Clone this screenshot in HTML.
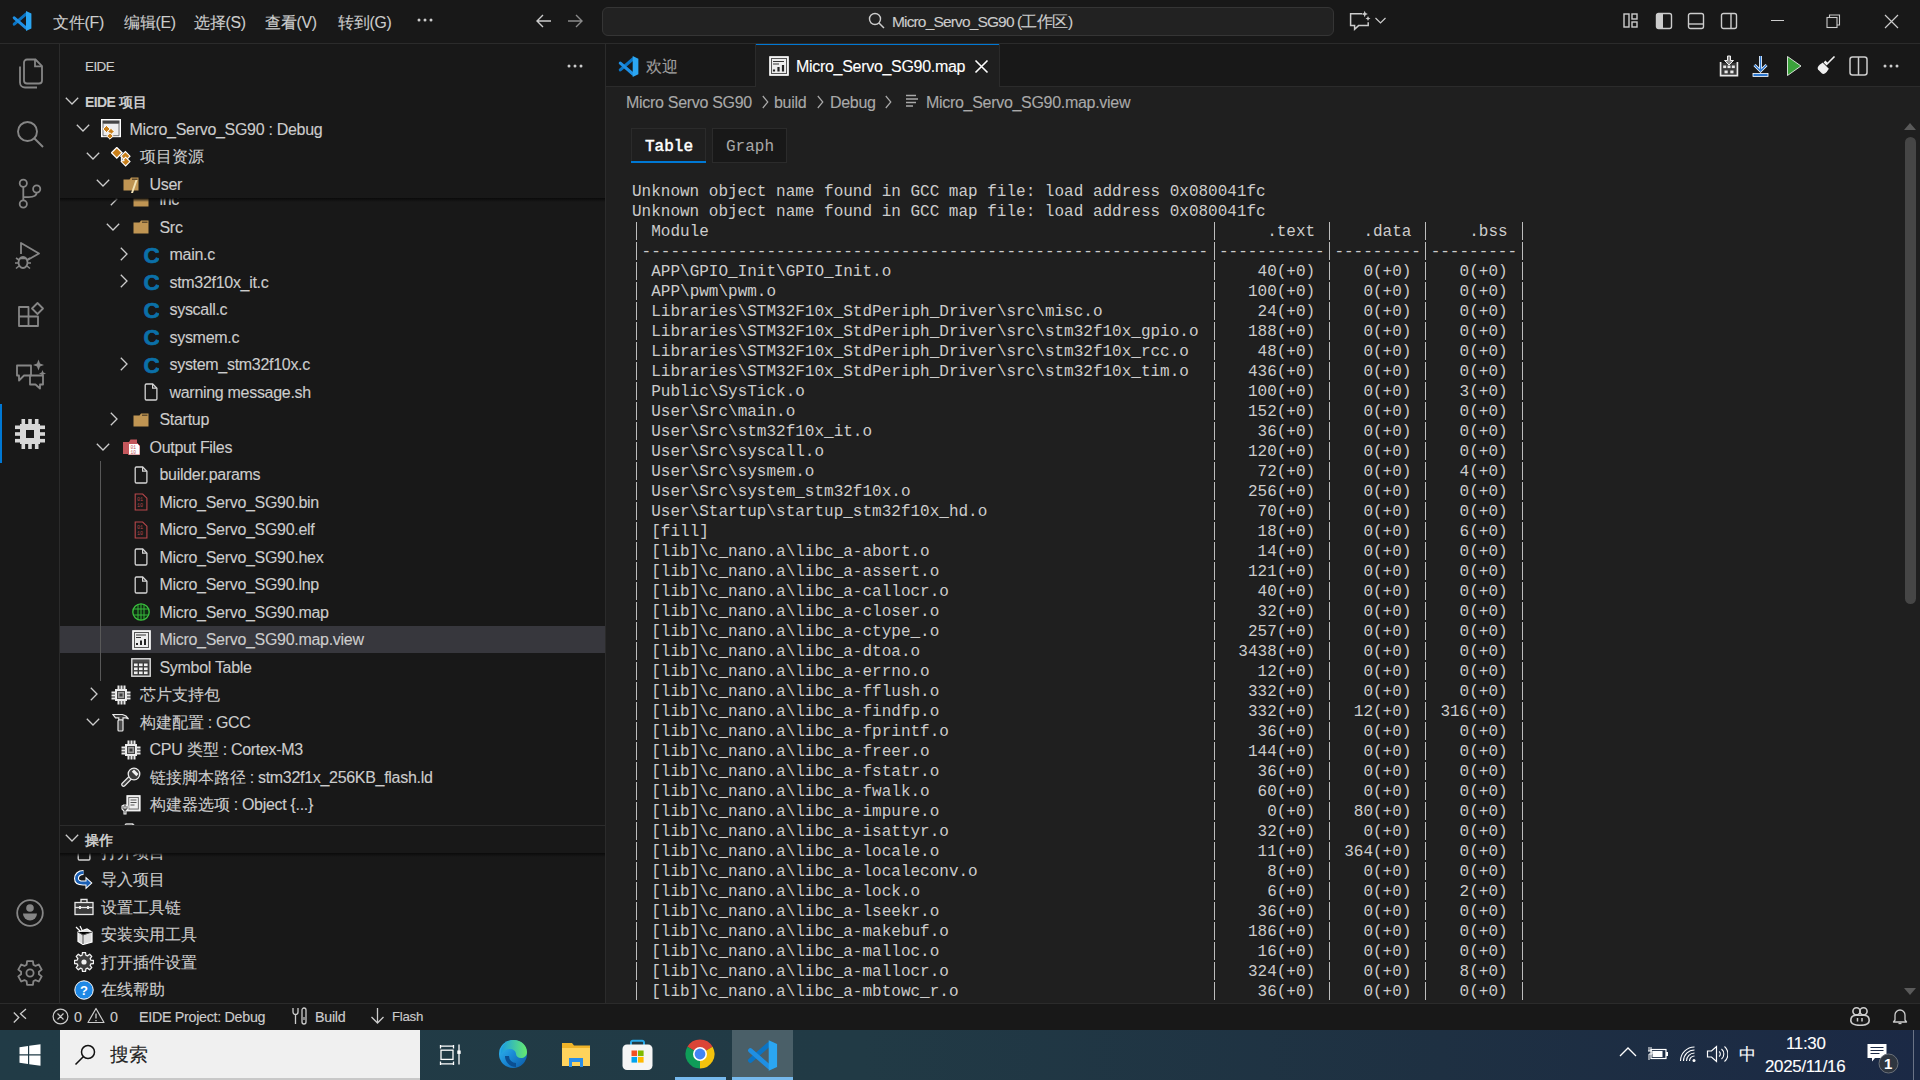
<!DOCTYPE html><html><head><meta charset="utf-8"><style>
html,body{margin:0;padding:0;}
body{width:1920px;height:1080px;overflow:hidden;position:relative;background:#181818;font-family:'Liberation Sans',sans-serif;color:#cccccc;}
svg{display:block}
</style></head><body>
<div style="position:absolute;left:0px;top:0px;width:1920px;height:43px;background:#181818;"></div>
<div style="position:absolute;left:0px;top:43px;width:1920px;height:1px;background:#2b2b2b;"></div>
<svg style="position:absolute;left:12px;top:11px;" width="20" height="20" viewBox="0 0 100 100"><path d="M71 14L11 66" stroke="#0b74c4" stroke-width="15" stroke-linecap="round"/><path d="M71 86L11 34" stroke="#1f8fe3" stroke-width="15" stroke-linecap="round"/><path d="M70 0.5L97 13v74L70 99.5z" fill="#2ba6f2"/></svg>
<div style="position:absolute;left:53px;top:12.6px;height:20px;line-height:20px;font-size:15.8px;color:#cccccc;font-weight:normal;white-space:pre;font-family:'Liberation Sans', sans-serif;letter-spacing:-0.3px;-webkit-text-stroke:0.12px #cccccc;"><span style="display:inline-block;width:15.80px;text-align:center;letter-spacing:0">文</span><span style="display:inline-block;width:15.80px;text-align:center;letter-spacing:0">件</span>(F)</div>
<div style="position:absolute;left:124px;top:12.6px;height:20px;line-height:20px;font-size:15.8px;color:#cccccc;font-weight:normal;white-space:pre;font-family:'Liberation Sans', sans-serif;letter-spacing:-0.3px;-webkit-text-stroke:0.12px #cccccc;"><span style="display:inline-block;width:15.80px;text-align:center;letter-spacing:0">编</span><span style="display:inline-block;width:15.80px;text-align:center;letter-spacing:0">辑</span>(E)</div>
<div style="position:absolute;left:194px;top:12.6px;height:20px;line-height:20px;font-size:15.8px;color:#cccccc;font-weight:normal;white-space:pre;font-family:'Liberation Sans', sans-serif;letter-spacing:-0.3px;-webkit-text-stroke:0.12px #cccccc;"><span style="display:inline-block;width:15.80px;text-align:center;letter-spacing:0">选</span><span style="display:inline-block;width:15.80px;text-align:center;letter-spacing:0">择</span>(S)</div>
<div style="position:absolute;left:265px;top:12.6px;height:20px;line-height:20px;font-size:15.8px;color:#cccccc;font-weight:normal;white-space:pre;font-family:'Liberation Sans', sans-serif;letter-spacing:-0.3px;-webkit-text-stroke:0.12px #cccccc;"><span style="display:inline-block;width:15.80px;text-align:center;letter-spacing:0">查</span><span style="display:inline-block;width:15.80px;text-align:center;letter-spacing:0">看</span>(V)</div>
<div style="position:absolute;left:338px;top:12.6px;height:20px;line-height:20px;font-size:15.8px;color:#cccccc;font-weight:normal;white-space:pre;font-family:'Liberation Sans', sans-serif;letter-spacing:-0.3px;-webkit-text-stroke:0.12px #cccccc;"><span style="display:inline-block;width:15.80px;text-align:center;letter-spacing:0">转</span><span style="display:inline-block;width:15.80px;text-align:center;letter-spacing:0">到</span>(G)</div>
<svg style="position:absolute;left:417px;top:18px;" width="16" height="4" viewBox="0 0 16 4"><circle cx="2" cy="2" r="1.5" fill="#cccccc"/><circle cx="8" cy="2" r="1.5" fill="#cccccc"/><circle cx="14" cy="2" r="1.5" fill="#cccccc"/></svg>
<svg style="position:absolute;left:535px;top:13px;" width="17" height="16" viewBox="0 0 17 16"><path d="M16 8H2M8 2L2 8l6 6" stroke="#cccccc" stroke-width="1.4" fill="none"/></svg>
<svg style="position:absolute;left:567px;top:13px;" width="17" height="16" viewBox="0 0 17 16"><path d="M1 8h14M9 2l6 6-6 6" stroke="#8a8a8a" stroke-width="1.4" fill="none"/></svg>
<div style="position:absolute;left:602px;top:7px;width:730px;height:27px;background:#222222;border:1px solid #353535;border-radius:6px;"></div>
<svg style="position:absolute;left:868px;top:12px;" width="17" height="18" viewBox="0 0 17 18"><circle cx="7" cy="7" r="5.5" stroke="#cccccc" stroke-width="1.4" fill="none"/><path d="M11 11l5 5" stroke="#cccccc" stroke-width="1.5"/></svg>
<div style="position:absolute;left:892px;top:11.6px;height:20px;line-height:20px;font-size:15.5px;color:#cccccc;font-weight:normal;white-space:pre;font-family:'Liberation Sans', sans-serif;letter-spacing:-0.85px;-webkit-text-stroke:0.12px #cccccc;">Micro_Servo_SG90 (<span style="display:inline-block;width:15.50px;text-align:center;letter-spacing:0">工</span><span style="display:inline-block;width:15.50px;text-align:center;letter-spacing:0">作</span><span style="display:inline-block;width:15.50px;text-align:center;letter-spacing:0">区</span>)</div>
<svg style="position:absolute;left:1349px;top:10px;" width="40" height="22" viewBox="0 0 40 22"><path d="M13 3.8H1.6v11.8h4v3.6l4-3.6h9.6v-3.4" stroke="#cccccc" stroke-width="1.5" fill="none"/><path d="M15.7 0.8l0.9 2.3 2.3 0.9-2.3 0.9-0.9 2.3-0.9-2.3-2.3-0.9 2.3-0.9z" fill="#cccccc"/><path d="M19 6l0.8 1.7 1.7 0.8-1.7 0.8-0.8 1.7-0.8-1.7-1.7-0.8 1.7-0.8z" fill="#cccccc"/><path d="M26.5 8l5 5 5-5" stroke="#cccccc" stroke-width="1.2" fill="none"/></svg>
<svg style="position:absolute;left:1622px;top:12px;" width="18" height="18" viewBox="0 0 18 18"><rect x="2" y="2" width="5" height="13" stroke="#cccccc" stroke-width="1.4" fill="none"/><rect x="10" y="2" width="5" height="5" stroke="#cccccc" stroke-width="1.4" fill="none"/><rect x="10" y="10" width="5" height="5" stroke="#cccccc" stroke-width="1.4" fill="none"/></svg>
<svg style="position:absolute;left:1655px;top:12px;" width="18" height="18" viewBox="0 0 18 18"><rect x="1.5" y="1.5" width="15" height="15" rx="2" stroke="#cccccc" stroke-width="1.4" fill="none"/><rect x="2" y="2" width="6" height="14" fill="#cccccc"/></svg>
<svg style="position:absolute;left:1687px;top:12px;" width="18" height="18" viewBox="0 0 18 18"><rect x="1.5" y="1.5" width="15" height="15" rx="2" stroke="#cccccc" stroke-width="1.4" fill="none"/><path d="M2 12h14" stroke="#cccccc" stroke-width="1.4"/></svg>
<svg style="position:absolute;left:1720px;top:12px;" width="18" height="18" viewBox="0 0 18 18"><rect x="1.5" y="1.5" width="15" height="15" rx="2" stroke="#cccccc" stroke-width="1.4" fill="none"/><path d="M11 2v14" stroke="#cccccc" stroke-width="1.4"/></svg>
<div style="position:absolute;left:1771px;top:20px;width:13px;height:1px;background:#cccccc;"></div>
<svg style="position:absolute;left:1826px;top:14px;" width="15" height="15" viewBox="0 0 15 15"><rect x="1" y="3.5" width="10" height="10" stroke="#cccccc" stroke-width="1.1" fill="none"/><path d="M3.5 3.5V1h10v10h-2.5" stroke="#cccccc" stroke-width="1.1" fill="none"/></svg>
<svg style="position:absolute;left:1884px;top:14px;" width="15" height="15" viewBox="0 0 15 15"><path d="M1 1l13 13M14 1L1 14" stroke="#cccccc" stroke-width="1.2"/></svg>
<div style="position:absolute;left:0px;top:44px;width:59px;height:959px;background:#181818;"></div>
<div style="position:absolute;left:59px;top:44px;width:1px;height:959px;background:#2b2b2b;"></div>
<svg style="position:absolute;left:16px;top:58px;" width="28" height="31" viewBox="0 0 28 31"><path d="M8 4.5a3 3 0 0 1 3-3h8.5l6.5 6.5v14.5a3 3 0 0 1-3 3H11a3 3 0 0 1-3-3z" stroke="#868686" stroke-width="1.8" fill="none"/><path d="M19 1.5v6.8h6.8" stroke="#868686" stroke-width="1.8" fill="none"/><path d="M4 8.5v16a5 5 0 0 0 5 5h12" stroke="#868686" stroke-width="1.8" fill="none"/></svg>
<svg style="position:absolute;left:15px;top:119px;" width="30" height="30" viewBox="0 0 30 30"><circle cx="12.5" cy="12.5" r="9.5" stroke="#868686" stroke-width="1.9" fill="none"/><path d="M19.5 19.5l8.5 8.5" stroke="#868686" stroke-width="2" /></svg>
<svg style="position:absolute;left:15px;top:177px;" width="30" height="34" viewBox="0 0 30 34"><circle cx="8.3" cy="6.3" r="3.6" stroke="#868686" stroke-width="1.8" fill="none"/><circle cx="21.7" cy="12" r="3.6" stroke="#868686" stroke-width="1.8" fill="none"/><circle cx="8.3" cy="27" r="3.6" stroke="#868686" stroke-width="1.8" fill="none"/><path d="M8.3 10v13.4M21.7 15.6c0 4-4 4.5-8 4.5H8.3" stroke="#868686" stroke-width="1.8" fill="none"/></svg>
<svg style="position:absolute;left:13px;top:241px;" width="32" height="30" viewBox="0 0 32 30"><path d="M8 13V2l18 10.5-11.5 6.5" stroke="#868686" stroke-width="1.8" fill="none" stroke-linejoin="round"/><ellipse cx="10" cy="21.5" rx="4.5" ry="5.5" stroke="#868686" stroke-width="1.8" fill="none"/><path d="M3 17l3 2M17 17l-3 2M2 22h3.5M18 22h-3.5M3 27.5l3-2.5M17 27.5l-3-2.5M6.5 17.5h7" stroke="#868686" stroke-width="1.6"/></svg>
<svg style="position:absolute;left:16px;top:300px;" width="30" height="30" viewBox="0 0 30 30"><path d="M3 7h9.5v9.5H22V26H3z M3 16.5h9.5V26" stroke="#868686" stroke-width="1.8" fill="none" stroke-linejoin="round"/><path d="M16 8.5l5.5-5.5 5.5 5.5-5.5 5.5z" stroke="#868686" stroke-width="1.8" fill="none" stroke-linejoin="round"/></svg>
<svg style="position:absolute;left:13px;top:357px;" width="34" height="34" viewBox="0 0 34 34"><path d="M4 8.5h14v10H11l-5 5v-5H4z" stroke="#868686" stroke-width="1.8" fill="none" stroke-linejoin="round"/><path d="M17 18.5h13v9h-3v4l-4.5-4H17z" stroke="#868686" stroke-width="1.8" fill="none" stroke-linejoin="round"/><path d="M25.5 2.5l1.5 4 4 1.5-4 1.5-1.5 4-1.5-4-4-1.5 4-1.5z" fill="#868686"/><path d="M29.5 13l1 2.5 2.5 1-2.5 1-1 2.5-1-2.5-2.5-1 2.5-1z" fill="#868686"/></svg>
<svg style="position:absolute;left:15px;top:419px;" width="30" height="30" viewBox="0 0 30 30"><rect x="5" y="5" width="20" height="20" fill="#d7d7d7"/><rect x="11" y="11" width="8" height="8" fill="#181818"/><rect x="6.500000000000001" y="0" width="3.6" height="5.5" fill="#d7d7d7"/><rect x="6.500000000000001" y="24.5" width="3.6" height="5.5" fill="#d7d7d7"/><rect x="0" y="6.500000000000001" width="5.5" height="3.6" fill="#d7d7d7"/><rect x="24.5" y="6.500000000000001" width="5.5" height="3.6" fill="#d7d7d7"/><rect x="13.2" y="0" width="3.6" height="5.5" fill="#d7d7d7"/><rect x="13.2" y="24.5" width="3.6" height="5.5" fill="#d7d7d7"/><rect x="0" y="13.2" width="5.5" height="3.6" fill="#d7d7d7"/><rect x="24.5" y="13.2" width="5.5" height="3.6" fill="#d7d7d7"/><rect x="19.9" y="0" width="3.6" height="5.5" fill="#d7d7d7"/><rect x="19.9" y="24.5" width="3.6" height="5.5" fill="#d7d7d7"/><rect x="0" y="19.9" width="5.5" height="3.6" fill="#d7d7d7"/><rect x="24.5" y="19.9" width="5.5" height="3.6" fill="#d7d7d7"/></svg>
<div style="position:absolute;left:0px;top:404px;width:2px;height:59px;background:#0078d4;"></div>
<svg style="position:absolute;left:16px;top:899px;" width="28" height="28" viewBox="0 0 28 28"><circle cx="14" cy="14" r="12.8" stroke="#868686" stroke-width="1.8" fill="none"/><circle cx="14" cy="9" r="3.8" fill="#868686"/><path d="M7 14.5h14a7 7 0 0 1-14 0z" fill="#868686"/></svg>
<svg style="position:absolute;left:16px;top:959px;" width="28" height="28" viewBox="0 0 28 28"><path d="M11.05 2.16 L16.95 2.16 L17.37 5.66 L19.54 6.91 L22.78 5.53 L25.73 10.64 L22.91 12.75 L22.91 15.25 L25.73 17.36 L22.78 22.47 L19.54 21.09 L17.37 22.34 L16.95 25.84 L11.05 25.84 L10.63 22.34 L8.46 21.09 L5.22 22.47 L2.27 17.36 L5.09 15.25 L5.09 12.75 L2.27 10.64 L5.22 5.53 L8.46 6.91 L10.63 5.66z" stroke="#868686" stroke-width="1.8" fill="none" stroke-linejoin="round"/><circle cx="14" cy="14" r="3.6" stroke="#868686" stroke-width="1.8" fill="none"/></svg>
<div style="position:absolute;left:60px;top:44px;width:545px;height:959px;background:#181818;"></div>
<div style="position:absolute;left:605px;top:44px;width:1px;height:959px;background:#2b2b2b;"></div>
<div style="position:absolute;left:85px;top:56.6px;height:20px;line-height:20px;font-size:13.5px;color:#cccccc;font-weight:normal;white-space:pre;font-family:'Liberation Sans', sans-serif;letter-spacing:-0.6px;-webkit-text-stroke:0.12px #cccccc;">EIDE</div>
<svg style="position:absolute;left:567px;top:64px;" width="16" height="4" viewBox="0 0 16 4"><circle cx="2" cy="2" r="1.5" fill="#cccccc"/><circle cx="8" cy="2" r="1.5" fill="#cccccc"/><circle cx="14" cy="2" r="1.5" fill="#cccccc"/></svg>
<svg style="position:absolute;left:65px;top:96.8px;" width="14" height="8" viewBox="0 0 14 8"><path d="M0.8 0.8L7 7l6.2-6.2" stroke="#cccccc" stroke-width="1.3" fill="none"/></svg>
<div style="position:absolute;left:85px;top:92.1px;height:20px;line-height:20px;font-size:14px;color:#cccccc;font-weight:bold;white-space:pre;font-family:'Liberation Sans', sans-serif;letter-spacing:-0.6px;">EIDE <span style="display:inline-block;width:14.00px;text-align:center;letter-spacing:0">项</span><span style="display:inline-block;width:14.00px;text-align:center;letter-spacing:0">目</span></div>
<div style="position:absolute;left:60px;top:626px;width:545px;height:27px;background:#37373d;"></div>
<div style="position:absolute;left:100px;top:461px;width:1px;height:220px;background:#585858;"></div>
<svg style="position:absolute;left:109.5px;top:191.95px;" width="8" height="14" viewBox="0 0 8 14"><path d="M0.8 0.8L7 7l-6.2 6.2" stroke="#cccccc" stroke-width="1.3" fill="none"/></svg>
<svg style="position:absolute;left:133px;top:192.75px;" width="16" height="16" viewBox="0 0 16 16"><path d="M0.5 2.5h6l1.5-2h7.5v13h-15z" fill="#c09553"/><path d="M9 2.2h5.5" stroke="#3a2f1f" stroke-width="1"/></svg>
<div style="position:absolute;left:159.5px;top:190.35px;height:20px;line-height:20px;font-size:16px;color:#cccccc;font-weight:normal;white-space:pre;font-family:'Liberation Sans', sans-serif;letter-spacing:-0.3px;-webkit-text-stroke:0.12px #cccccc;">inc</div>
<svg style="position:absolute;left:106.3px;top:222.55px;" width="14" height="8" viewBox="0 0 14 8"><path d="M0.8 0.8L7 7l6.2-6.2" stroke="#cccccc" stroke-width="1.3" fill="none"/></svg>
<svg style="position:absolute;left:133px;top:220.25px;" width="16" height="16" viewBox="0 0 16 16"><path d="M0.5 2.5h6l1.5-2h7.5v13h-15z" fill="#c09553"/><path d="M9 2.2h5.5" stroke="#3a2f1f" stroke-width="1"/></svg>
<div style="position:absolute;left:159.5px;top:217.85px;height:20px;line-height:20px;font-size:16px;color:#cccccc;font-weight:normal;white-space:pre;font-family:'Liberation Sans', sans-serif;letter-spacing:-0.3px;-webkit-text-stroke:0.12px #cccccc;">Src</div>
<svg style="position:absolute;left:119.5px;top:246.95px;" width="8" height="14" viewBox="0 0 8 14"><path d="M0.8 0.8L7 7l-6.2 6.2" stroke="#cccccc" stroke-width="1.3" fill="none"/></svg>
<svg style="position:absolute;left:143px;top:245.75px;" width="16" height="18" viewBox="0 0 16 18"><text x="0.4" y="16.6" font-size="22.5" font-weight="bold" fill="#0b70a8" stroke="#0b70a8" stroke-width="0.7" font-family="Liberation Sans">C</text></svg>
<div style="position:absolute;left:169.5px;top:245.35px;height:20px;line-height:20px;font-size:16px;color:#cccccc;font-weight:normal;white-space:pre;font-family:'Liberation Sans', sans-serif;letter-spacing:-0.3px;-webkit-text-stroke:0.12px #cccccc;">main.c</div>
<svg style="position:absolute;left:119.5px;top:274.45px;" width="8" height="14" viewBox="0 0 8 14"><path d="M0.8 0.8L7 7l-6.2 6.2" stroke="#cccccc" stroke-width="1.3" fill="none"/></svg>
<svg style="position:absolute;left:143px;top:273.25px;" width="16" height="18" viewBox="0 0 16 18"><text x="0.4" y="16.6" font-size="22.5" font-weight="bold" fill="#0b70a8" stroke="#0b70a8" stroke-width="0.7" font-family="Liberation Sans">C</text></svg>
<div style="position:absolute;left:169.5px;top:272.85px;height:20px;line-height:20px;font-size:16px;color:#cccccc;font-weight:normal;white-space:pre;font-family:'Liberation Sans', sans-serif;letter-spacing:-0.3px;-webkit-text-stroke:0.12px #cccccc;">stm32f10x_it.c</div>
<svg style="position:absolute;left:143px;top:300.75px;" width="16" height="18" viewBox="0 0 16 18"><text x="0.4" y="16.6" font-size="22.5" font-weight="bold" fill="#0b70a8" stroke="#0b70a8" stroke-width="0.7" font-family="Liberation Sans">C</text></svg>
<div style="position:absolute;left:169.5px;top:300.35px;height:20px;line-height:20px;font-size:16px;color:#cccccc;font-weight:normal;white-space:pre;font-family:'Liberation Sans', sans-serif;letter-spacing:-0.3px;-webkit-text-stroke:0.12px #cccccc;">syscall.c</div>
<svg style="position:absolute;left:143px;top:328.25px;" width="16" height="18" viewBox="0 0 16 18"><text x="0.4" y="16.6" font-size="22.5" font-weight="bold" fill="#0b70a8" stroke="#0b70a8" stroke-width="0.7" font-family="Liberation Sans">C</text></svg>
<div style="position:absolute;left:169.5px;top:327.85px;height:20px;line-height:20px;font-size:16px;color:#cccccc;font-weight:normal;white-space:pre;font-family:'Liberation Sans', sans-serif;letter-spacing:-0.3px;-webkit-text-stroke:0.12px #cccccc;">sysmem.c</div>
<svg style="position:absolute;left:119.5px;top:356.95px;" width="8" height="14" viewBox="0 0 8 14"><path d="M0.8 0.8L7 7l-6.2 6.2" stroke="#cccccc" stroke-width="1.3" fill="none"/></svg>
<svg style="position:absolute;left:143px;top:355.75px;" width="16" height="18" viewBox="0 0 16 18"><text x="0.4" y="16.6" font-size="22.5" font-weight="bold" fill="#0b70a8" stroke="#0b70a8" stroke-width="0.7" font-family="Liberation Sans">C</text></svg>
<div style="position:absolute;left:169.5px;top:355.35px;height:20px;line-height:20px;font-size:16px;color:#cccccc;font-weight:normal;white-space:pre;font-family:'Liberation Sans', sans-serif;letter-spacing:-0.3px;-webkit-text-stroke:0.12px #cccccc;">system_stm32f10x.c</div>
<svg style="position:absolute;left:144px;top:383.25px;" width="14" height="18" viewBox="0 0 14 18"><path d="M1.2 2.2a1.2 1.2 0 0 1 1.2-1.2h6.3l4.2 4.2v10.6a1.2 1.2 0 0 1-1.2 1.2H2.4a1.2 1.2 0 0 1-1.2-1.2z" stroke="#d4d4d4" stroke-width="1.3" fill="none"/><path d="M8.6 1v4.2h4.2" stroke="#d4d4d4" stroke-width="1.2" fill="none"/></svg>
<div style="position:absolute;left:169.5px;top:382.85px;height:20px;line-height:20px;font-size:16px;color:#cccccc;font-weight:normal;white-space:pre;font-family:'Liberation Sans', sans-serif;letter-spacing:-0.3px;-webkit-text-stroke:0.12px #cccccc;">warning message.sh</div>
<svg style="position:absolute;left:109.5px;top:411.95px;" width="8" height="14" viewBox="0 0 8 14"><path d="M0.8 0.8L7 7l-6.2 6.2" stroke="#cccccc" stroke-width="1.3" fill="none"/></svg>
<svg style="position:absolute;left:133px;top:412.75px;" width="16" height="16" viewBox="0 0 16 16"><path d="M0.5 2.5h6l1.5-2h7.5v13h-15z" fill="#c09553"/><path d="M9 2.2h5.5" stroke="#3a2f1f" stroke-width="1"/></svg>
<div style="position:absolute;left:159.5px;top:410.35px;height:20px;line-height:20px;font-size:16px;color:#cccccc;font-weight:normal;white-space:pre;font-family:'Liberation Sans', sans-serif;letter-spacing:-0.3px;-webkit-text-stroke:0.12px #cccccc;">Startup</div>
<svg style="position:absolute;left:96.3px;top:442.55px;" width="14" height="8" viewBox="0 0 14 8"><path d="M0.8 0.8L7 7l6.2-6.2" stroke="#cccccc" stroke-width="1.3" fill="none"/></svg>
<svg style="position:absolute;left:122.5px;top:439.25px;" width="17" height="16" viewBox="0 0 17 16"><path d="M0 3h6l1.5-2.5H14V15H0z" fill="#c4575c"/><path d="M5.5 4.5h9l2.5 2.5v9h-11.5z" fill="#ffffff" stroke="#c4575c" stroke-width="1"/><text x="7.5" y="10" font-size="4.5" fill="#c4575c" font-family="Liberation Mono">01</text><text x="7.5" y="14.5" font-size="4.5" fill="#c4575c" font-family="Liberation Mono">10</text></svg>
<div style="position:absolute;left:149.5px;top:437.85px;height:20px;line-height:20px;font-size:16px;color:#cccccc;font-weight:normal;white-space:pre;font-family:'Liberation Sans', sans-serif;letter-spacing:-0.3px;-webkit-text-stroke:0.12px #cccccc;">Output Files</div>
<svg style="position:absolute;left:134px;top:465.75px;" width="14" height="18" viewBox="0 0 14 18"><path d="M1.2 2.2a1.2 1.2 0 0 1 1.2-1.2h6.3l4.2 4.2v10.6a1.2 1.2 0 0 1-1.2 1.2H2.4a1.2 1.2 0 0 1-1.2-1.2z" stroke="#d4d4d4" stroke-width="1.3" fill="none"/><path d="M8.6 1v4.2h4.2" stroke="#d4d4d4" stroke-width="1.2" fill="none"/></svg>
<div style="position:absolute;left:159.5px;top:465.35px;height:20px;line-height:20px;font-size:16px;color:#cccccc;font-weight:normal;white-space:pre;font-family:'Liberation Sans', sans-serif;letter-spacing:-0.3px;-webkit-text-stroke:0.12px #cccccc;">builder.params</div>
<svg style="position:absolute;left:134px;top:493.25px;" width="14" height="18" viewBox="0 0 14 18"><path d="M1.2 1h7.5l4.2 4.2v11.8H1.2z" stroke="#b8474b" stroke-width="1.1" fill="none"/><text x="3" y="8" font-size="5" fill="#b8474b" font-family="Liberation Mono">01</text><text x="3" y="14" font-size="5" fill="#b8474b" font-family="Liberation Mono">10</text></svg>
<div style="position:absolute;left:159.5px;top:492.85px;height:20px;line-height:20px;font-size:16px;color:#cccccc;font-weight:normal;white-space:pre;font-family:'Liberation Sans', sans-serif;letter-spacing:-0.3px;-webkit-text-stroke:0.12px #cccccc;">Micro_Servo_SG90.bin</div>
<svg style="position:absolute;left:134px;top:520.75px;" width="14" height="18" viewBox="0 0 14 18"><path d="M1.2 1h7.5l4.2 4.2v11.8H1.2z" stroke="#b8474b" stroke-width="1.1" fill="none"/><text x="3" y="8" font-size="5" fill="#b8474b" font-family="Liberation Mono">01</text><text x="3" y="14" font-size="5" fill="#b8474b" font-family="Liberation Mono">10</text></svg>
<div style="position:absolute;left:159.5px;top:520.35px;height:20px;line-height:20px;font-size:16px;color:#cccccc;font-weight:normal;white-space:pre;font-family:'Liberation Sans', sans-serif;letter-spacing:-0.3px;-webkit-text-stroke:0.12px #cccccc;">Micro_Servo_SG90.elf</div>
<svg style="position:absolute;left:134px;top:548.25px;" width="14" height="18" viewBox="0 0 14 18"><path d="M1.2 2.2a1.2 1.2 0 0 1 1.2-1.2h6.3l4.2 4.2v10.6a1.2 1.2 0 0 1-1.2 1.2H2.4a1.2 1.2 0 0 1-1.2-1.2z" stroke="#d4d4d4" stroke-width="1.3" fill="none"/><path d="M8.6 1v4.2h4.2" stroke="#d4d4d4" stroke-width="1.2" fill="none"/></svg>
<div style="position:absolute;left:159.5px;top:547.85px;height:20px;line-height:20px;font-size:16px;color:#cccccc;font-weight:normal;white-space:pre;font-family:'Liberation Sans', sans-serif;letter-spacing:-0.3px;-webkit-text-stroke:0.12px #cccccc;">Micro_Servo_SG90.hex</div>
<svg style="position:absolute;left:134px;top:575.75px;" width="14" height="18" viewBox="0 0 14 18"><path d="M1.2 2.2a1.2 1.2 0 0 1 1.2-1.2h6.3l4.2 4.2v10.6a1.2 1.2 0 0 1-1.2 1.2H2.4a1.2 1.2 0 0 1-1.2-1.2z" stroke="#d4d4d4" stroke-width="1.3" fill="none"/><path d="M8.6 1v4.2h4.2" stroke="#d4d4d4" stroke-width="1.2" fill="none"/></svg>
<div style="position:absolute;left:159.5px;top:575.35px;height:20px;line-height:20px;font-size:16px;color:#cccccc;font-weight:normal;white-space:pre;font-family:'Liberation Sans', sans-serif;letter-spacing:-0.3px;-webkit-text-stroke:0.12px #cccccc;">Micro_Servo_SG90.lnp</div>
<svg style="position:absolute;left:132px;top:603.25px;" width="18" height="18" viewBox="0 0 18 18"><circle cx="9" cy="9" r="8.2" fill="#0f2a12" stroke="#3cc23f" stroke-width="1.3"/><path d="M1 6h16M1 12h16M6 1.5v15M12 1.5v15M9 1v16" stroke="#36b83a" stroke-width="1"/></svg>
<div style="position:absolute;left:159.5px;top:602.85px;height:20px;line-height:20px;font-size:16px;color:#cccccc;font-weight:normal;white-space:pre;font-family:'Liberation Sans', sans-serif;letter-spacing:-0.3px;-webkit-text-stroke:0.12px #cccccc;">Micro_Servo_SG90.map</div>
<svg style="position:absolute;left:131.5px;top:629.75px;" width="19" height="20" viewBox="0 0 19 20"><rect x="0.8" y="0.8" width="17.4" height="18.4" fill="#e8e8e8" stroke="#ffffff" stroke-width="1.2"/><rect x="2.5" y="2.5" width="14" height="15" fill="#ececec" stroke="#555" stroke-width="1"/><path d="M4 5h10M4 7.5h5" stroke="#333" stroke-width="1.2"/><path d="M5 15v-2M9 15v-4.5M13 15v-6" stroke="#222" stroke-width="2"/></svg>
<div style="position:absolute;left:159.5px;top:630.35px;height:20px;line-height:20px;font-size:16px;color:#cccccc;font-weight:normal;white-space:pre;font-family:'Liberation Sans', sans-serif;letter-spacing:-0.3px;-webkit-text-stroke:0.12px #cccccc;">Micro_Servo_SG90.map.view</div>
<svg style="position:absolute;left:131px;top:657.75px;" width="20" height="19" viewBox="0 0 20 19"><rect x="0.8" y="0.8" width="18.4" height="17.4" fill="#3a3a3a" stroke="#e0e0e0" stroke-width="1.4"/><rect x="2" y="2" width="16" height="2.4" fill="#4a4a4a"/><rect x="3" y="5.5" width="3.6" height="2.6" fill="#f0f0f0"/><rect x="3" y="9.5" width="3.6" height="2.6" fill="#f0f0f0"/><rect x="3" y="13.5" width="3.6" height="2.6" fill="#f0f0f0"/><rect x="8" y="5.5" width="3.6" height="2.6" fill="#f0f0f0"/><rect x="8" y="9.5" width="3.6" height="2.6" fill="#f0f0f0"/><rect x="8" y="13.5" width="3.6" height="2.6" fill="#f0f0f0"/><rect x="13" y="5.5" width="3.6" height="2.6" fill="#f0f0f0"/><rect x="13" y="9.5" width="3.6" height="2.6" fill="#f0f0f0"/><rect x="13" y="13.5" width="3.6" height="2.6" fill="#f0f0f0"/></svg>
<div style="position:absolute;left:159.5px;top:657.85px;height:20px;line-height:20px;font-size:16px;color:#cccccc;font-weight:normal;white-space:pre;font-family:'Liberation Sans', sans-serif;letter-spacing:-0.3px;-webkit-text-stroke:0.12px #cccccc;">Symbol Table</div>
<svg style="position:absolute;left:89.5px;top:686.95px;" width="8" height="14" viewBox="0 0 8 14"><path d="M0.8 0.8L7 7l-6.2 6.2" stroke="#cccccc" stroke-width="1.3" fill="none"/></svg>
<svg style="position:absolute;left:111px;top:684.75px;" width="20" height="20" viewBox="0 0 20 20"><rect x="4.5" y="4.5" width="11" height="11" fill="#f0f0f0" stroke="#e8e8e8" stroke-width="1"/><rect x="6.5" y="6.5" width="7" height="7" fill="#9a9a9a" stroke="#444" stroke-width="1"/><rect x="8.5" y="8.5" width="3" height="3" fill="#3a3a3a"/><rect x="6.5" y="0.5" width="2" height="4" fill="#e8e8e8"/><rect x="6.5" y="15.5" width="2" height="4" fill="#e8e8e8"/><rect x="0.5" y="6.5" width="4" height="2" fill="#e8e8e8"/><rect x="15.5" y="6.5" width="4" height="2" fill="#e8e8e8"/><rect x="9.5" y="0.5" width="2" height="4" fill="#e8e8e8"/><rect x="9.5" y="15.5" width="2" height="4" fill="#e8e8e8"/><rect x="0.5" y="9.5" width="4" height="2" fill="#e8e8e8"/><rect x="15.5" y="9.5" width="4" height="2" fill="#e8e8e8"/><rect x="12.5" y="0.5" width="2" height="4" fill="#e8e8e8"/><rect x="12.5" y="15.5" width="2" height="4" fill="#e8e8e8"/><rect x="0.5" y="12.5" width="4" height="2" fill="#e8e8e8"/><rect x="15.5" y="12.5" width="4" height="2" fill="#e8e8e8"/></svg>
<div style="position:absolute;left:139.5px;top:685.35px;height:20px;line-height:20px;font-size:16px;color:#cccccc;font-weight:normal;white-space:pre;font-family:'Liberation Sans', sans-serif;letter-spacing:-0.3px;-webkit-text-stroke:0.12px #cccccc;"><span style="display:inline-block;width:16.00px;text-align:center;letter-spacing:0">芯</span><span style="display:inline-block;width:16.00px;text-align:center;letter-spacing:0">片</span><span style="display:inline-block;width:16.00px;text-align:center;letter-spacing:0">支</span><span style="display:inline-block;width:16.00px;text-align:center;letter-spacing:0">持</span><span style="display:inline-block;width:16.00px;text-align:center;letter-spacing:0">包</span></div>
<svg style="position:absolute;left:86.3px;top:717.55px;" width="14" height="8" viewBox="0 0 14 8"><path d="M0.8 0.8L7 7l6.2-6.2" stroke="#cccccc" stroke-width="1.3" fill="none"/></svg>
<svg style="position:absolute;left:112px;top:712.25px;" width="18" height="20" viewBox="0 0 18 20"><path d="M1 2.5h9.5l3.5 1.5 2.5 3-3-1.2H11V8H6.8V5.8H3.5z" fill="#3a3a3a" stroke="#e8e8e8" stroke-width="1.2"/><rect x="6" y="8" width="5" height="11" rx="1" fill="#4a4a4a" stroke="#e8e8e8" stroke-width="1.2"/></svg>
<div style="position:absolute;left:139.5px;top:712.85px;height:20px;line-height:20px;font-size:16px;color:#cccccc;font-weight:normal;white-space:pre;font-family:'Liberation Sans', sans-serif;letter-spacing:-0.3px;-webkit-text-stroke:0.12px #cccccc;"><span style="display:inline-block;width:16.00px;text-align:center;letter-spacing:0">构</span><span style="display:inline-block;width:16.00px;text-align:center;letter-spacing:0">建</span><span style="display:inline-block;width:16.00px;text-align:center;letter-spacing:0">配</span><span style="display:inline-block;width:16.00px;text-align:center;letter-spacing:0">置</span> : GCC</div>
<svg style="position:absolute;left:121px;top:739.75px;" width="20" height="20" viewBox="0 0 20 20"><rect x="4.5" y="4.5" width="11" height="11" fill="#f0f0f0" stroke="#e8e8e8" stroke-width="1"/><rect x="6.5" y="6.5" width="7" height="7" fill="#9a9a9a" stroke="#444" stroke-width="1"/><rect x="8.5" y="8.5" width="3" height="3" fill="#3a3a3a"/><rect x="6.5" y="0.5" width="2" height="4" fill="#e8e8e8"/><rect x="6.5" y="15.5" width="2" height="4" fill="#e8e8e8"/><rect x="0.5" y="6.5" width="4" height="2" fill="#e8e8e8"/><rect x="15.5" y="6.5" width="4" height="2" fill="#e8e8e8"/><rect x="9.5" y="0.5" width="2" height="4" fill="#e8e8e8"/><rect x="9.5" y="15.5" width="2" height="4" fill="#e8e8e8"/><rect x="0.5" y="9.5" width="4" height="2" fill="#e8e8e8"/><rect x="15.5" y="9.5" width="4" height="2" fill="#e8e8e8"/><rect x="12.5" y="0.5" width="2" height="4" fill="#e8e8e8"/><rect x="12.5" y="15.5" width="2" height="4" fill="#e8e8e8"/><rect x="0.5" y="12.5" width="4" height="2" fill="#e8e8e8"/><rect x="15.5" y="12.5" width="4" height="2" fill="#e8e8e8"/></svg>
<div style="position:absolute;left:149.5px;top:740.35px;height:20px;line-height:20px;font-size:16px;color:#cccccc;font-weight:normal;white-space:pre;font-family:'Liberation Sans', sans-serif;letter-spacing:-0.3px;-webkit-text-stroke:0.12px #cccccc;">CPU <span style="display:inline-block;width:16.00px;text-align:center;letter-spacing:0">类</span><span style="display:inline-block;width:16.00px;text-align:center;letter-spacing:0">型</span> : Cortex-M3</div>
<svg style="position:absolute;left:121px;top:767.25px;" width="20" height="20" viewBox="0 0 20 20"><path d="M2.5 17.5l8-8" stroke="#e8e8e8" stroke-width="4.6" stroke-linecap="round"/><path d="M2.5 17.5l8-8" stroke="#3c3c3c" stroke-width="2.2" stroke-linecap="round"/><circle cx="13" cy="7" r="5.8" fill="#3c3c3c" stroke="#e8e8e8" stroke-width="1.3"/><path d="M13 2.5l4.5 4.5-2.2 2.2-4.5-4.5z" fill="#f0f0f0"/></svg>
<div style="position:absolute;left:149.5px;top:767.85px;height:20px;line-height:20px;font-size:16px;color:#cccccc;font-weight:normal;white-space:pre;font-family:'Liberation Sans', sans-serif;letter-spacing:-0.3px;-webkit-text-stroke:0.12px #cccccc;"><span style="display:inline-block;width:16.00px;text-align:center;letter-spacing:0">链</span><span style="display:inline-block;width:16.00px;text-align:center;letter-spacing:0">接</span><span style="display:inline-block;width:16.00px;text-align:center;letter-spacing:0">脚</span><span style="display:inline-block;width:16.00px;text-align:center;letter-spacing:0">本</span><span style="display:inline-block;width:16.00px;text-align:center;letter-spacing:0">路</span><span style="display:inline-block;width:16.00px;text-align:center;letter-spacing:0">径</span> : stm32f1x_256KB_flash.ld</div>
<svg style="position:absolute;left:121px;top:794.75px;" width="20" height="20" viewBox="0 0 20 20"><rect x="6" y="0.8" width="13" height="15" fill="#dcdcdc" stroke="#ffffff" stroke-width="1.2"/><rect x="7.8" y="2.5" width="9.5" height="11.5" fill="#eeeeee" stroke="#555" stroke-width="0.8"/><path d="M9.5 5h6M9.5 7.5h6M9.5 10h4" stroke="#555" stroke-width="1"/><path d="M1 11l2-1v3h2v-3l2 1v3l-2 2v3H3v-3l-2-2z" fill="#444" stroke="#f0f0f0" stroke-width="1.1"/></svg>
<div style="position:absolute;left:149.5px;top:795.35px;height:20px;line-height:20px;font-size:16px;color:#cccccc;font-weight:normal;white-space:pre;font-family:'Liberation Sans', sans-serif;letter-spacing:-0.3px;-webkit-text-stroke:0.12px #cccccc;"><span style="display:inline-block;width:16.00px;text-align:center;letter-spacing:0">构</span><span style="display:inline-block;width:16.00px;text-align:center;letter-spacing:0">建</span><span style="display:inline-block;width:16.00px;text-align:center;letter-spacing:0">器</span><span style="display:inline-block;width:16.00px;text-align:center;letter-spacing:0">选</span><span style="display:inline-block;width:16.00px;text-align:center;letter-spacing:0">项</span> : Object {...}</div>
<svg style="position:absolute;left:124px;top:823.25px;" width="14" height="18" viewBox="0 0 14 18"><path d="M1.2 2.2a1.2 1.2 0 0 1 1.2-1.2h6.3l4.2 4.2v10.6a1.2 1.2 0 0 1-1.2 1.2H2.4a1.2 1.2 0 0 1-1.2-1.2z" stroke="#d4d4d4" stroke-width="1.3" fill="none"/><path d="M8.6 1v4.2h4.2" stroke="#d4d4d4" stroke-width="1.2" fill="none"/></svg>
<div style="position:absolute;left:149.5px;top:822.85px;height:20px;line-height:20px;font-size:16px;color:#cccccc;font-weight:normal;white-space:pre;font-family:'Liberation Sans', sans-serif;letter-spacing:-0.3px;-webkit-text-stroke:0.12px #cccccc;"></div>
<div style="position:absolute;left:60px;top:115px;width:545px;height:83px;background:#181818;"></div>
<svg style="position:absolute;left:76.3px;top:124.3px;" width="14" height="8" viewBox="0 0 14 8"><path d="M0.8 0.8L7 7l6.2-6.2" stroke="#cccccc" stroke-width="1.3" fill="none"/></svg>
<svg style="position:absolute;left:101px;top:119px;" width="20" height="21" viewBox="0 0 20 21"><rect x="0.6" y="0.6" width="18.8" height="17" fill="#eeeeee" stroke="#ffffff" stroke-width="1.2"/><rect x="1.5" y="1.5" width="17" height="3.2" fill="#444"/><path d="M2 4.7v12h16v-12" stroke="#666" stroke-width="0.9" fill="none"/><path d="M1.9 10L5.5 6.4L9.1 10L5.5 13.6z" fill="#c87f1a" stroke="#ffffff" stroke-width="1.0"/><path d="M6.8 12.5L10 9.3L13.2 12.5L10 15.7z" fill="#c87f1a" stroke="#ffffff" stroke-width="1.0"/><path d="M5.8 17L9 13.8L12.2 17L9 20.2z" fill="#c87f1a" stroke="#ffffff" stroke-width="1.0"/></svg>
<div style="position:absolute;left:129.5px;top:119.6px;height:20px;line-height:20px;font-size:16px;color:#cccccc;font-weight:normal;white-space:pre;font-family:'Liberation Sans', sans-serif;letter-spacing:-0.3px;-webkit-text-stroke:0.12px #cccccc;">Micro_Servo_SG90 : Debug</div>
<svg style="position:absolute;left:86.3px;top:151.8px;" width="14" height="8" viewBox="0 0 14 8"><path d="M0.8 0.8L7 7l6.2-6.2" stroke="#cccccc" stroke-width="1.3" fill="none"/></svg>
<svg style="position:absolute;left:111px;top:146.5px;" width="20" height="20" viewBox="0 0 20 20"><path d="M0.5 5.8L5.8 0.5L11.1 5.8L5.8 11.1z" fill="#c87f1a" stroke="#ffffff" stroke-width="1.3"/><path d="M9.8 9.2L14.4 4.6L19.0 9.2L14.4 13.799999999999999z" fill="#c87f1a" stroke="#ffffff" stroke-width="1.1"/><path d="M10.2 14.6L14.6 10.2L19.0 14.6L14.6 19.0z" fill="#c87f1a" stroke="#ffffff" stroke-width="1.1"/><path d="M10.5 8.5v5h3" stroke="#eeeeee" stroke-width="1.3" fill="none"/></svg>
<div style="position:absolute;left:139.5px;top:147.1px;height:20px;line-height:20px;font-size:16px;color:#cccccc;font-weight:normal;white-space:pre;font-family:'Liberation Sans', sans-serif;letter-spacing:-0.3px;-webkit-text-stroke:0.12px #cccccc;"><span style="display:inline-block;width:16.00px;text-align:center;letter-spacing:0">项</span><span style="display:inline-block;width:16.00px;text-align:center;letter-spacing:0">目</span><span style="display:inline-block;width:16.00px;text-align:center;letter-spacing:0">资</span><span style="display:inline-block;width:16.00px;text-align:center;letter-spacing:0">源</span></div>
<svg style="position:absolute;left:96.3px;top:179.3px;" width="14" height="8" viewBox="0 0 14 8"><path d="M0.8 0.8L7 7l6.2-6.2" stroke="#cccccc" stroke-width="1.3" fill="none"/></svg>
<svg style="position:absolute;left:123px;top:177px;" width="16" height="16" viewBox="0 0 16 16"><path d="M0.5 2.5h6l1.5-2h7.5v13h-15z" fill="#c09553"/><path d="M9 2.2h5.5" stroke="#3a2f1f" stroke-width="1"/><path d="M8 16L12.5 3h2L10 16z" fill="#f3e3b5"/></svg>
<div style="position:absolute;left:149.5px;top:174.6px;height:20px;line-height:20px;font-size:16px;color:#cccccc;font-weight:normal;white-space:pre;font-family:'Liberation Sans', sans-serif;letter-spacing:-0.3px;-webkit-text-stroke:0.12px #cccccc;">User</div>
<div style="position:absolute;left:60px;top:198px;width:545px;height:4px;background:linear-gradient(#0a0a0a,rgba(0,0,0,0));"></div>
<svg style="position:absolute;left:77px;top:843.0px;" width="14" height="18" viewBox="0 0 14 18"><path d="M1.2 2.2a1.2 1.2 0 0 1 1.2-1.2h6.3l4.2 4.2v10.6a1.2 1.2 0 0 1-1.2 1.2H2.4a1.2 1.2 0 0 1-1.2-1.2z" stroke="#d4d4d4" stroke-width="1.3" fill="none"/><path d="M8.6 1v4.2h4.2" stroke="#d4d4d4" stroke-width="1.2" fill="none"/></svg>
<div style="position:absolute;left:101px;top:842.6px;height:20px;line-height:20px;font-size:16px;color:#cccccc;font-weight:normal;white-space:pre;font-family:'Liberation Sans', sans-serif;letter-spacing:-0.3px;-webkit-text-stroke:0.12px #cccccc;"><span style="display:inline-block;width:16.00px;text-align:center;letter-spacing:0">打</span><span style="display:inline-block;width:16.00px;text-align:center;letter-spacing:0">开</span><span style="display:inline-block;width:16.00px;text-align:center;letter-spacing:0">项</span><span style="display:inline-block;width:16.00px;text-align:center;letter-spacing:0">目</span></div>
<svg style="position:absolute;left:74px;top:869.5px;" width="20" height="20" viewBox="0 0 20 20"><path d="M9.5 2.5C5 2.5 2.5 5 2.5 8.5S5 13 9 13h4" stroke="#ffffff" stroke-width="5" fill="none"/><path d="M11.5 6.5L18.5 13l-7 6.5z" fill="#ffffff"/><path d="M9.5 2.5C5 2.5 2.5 5 2.5 8.5S5 13 9 13h4" stroke="#1a5fb4" stroke-width="2.8" fill="none"/><path d="M12.5 8.8L17 13l-4.5 4.2z" fill="#1a5fb4"/></svg>
<div style="position:absolute;left:101px;top:870.1px;height:20px;line-height:20px;font-size:16px;color:#cccccc;font-weight:normal;white-space:pre;font-family:'Liberation Sans', sans-serif;letter-spacing:-0.3px;-webkit-text-stroke:0.12px #cccccc;"><span style="display:inline-block;width:16.00px;text-align:center;letter-spacing:0">导</span><span style="display:inline-block;width:16.00px;text-align:center;letter-spacing:0">入</span><span style="display:inline-block;width:16.00px;text-align:center;letter-spacing:0">项</span><span style="display:inline-block;width:16.00px;text-align:center;letter-spacing:0">目</span></div>
<svg style="position:absolute;left:74px;top:898.0px;" width="20" height="18" viewBox="0 0 20 18"><rect x="1" y="4.5" width="18" height="12" fill="#3a3a3a" stroke="#e8e8e8" stroke-width="1.3"/><path d="M7 4.5V1.5h6v3" stroke="#e8e8e8" stroke-width="1.3" fill="none"/><path d="M1 9.5h18" stroke="#e8e8e8" stroke-width="1.3"/><rect x="5" y="8" width="2" height="3" fill="#e8e8e8"/><rect x="13" y="8" width="2" height="3" fill="#e8e8e8"/></svg>
<div style="position:absolute;left:101px;top:897.6px;height:20px;line-height:20px;font-size:16px;color:#cccccc;font-weight:normal;white-space:pre;font-family:'Liberation Sans', sans-serif;letter-spacing:-0.3px;-webkit-text-stroke:0.12px #cccccc;"><span style="display:inline-block;width:16.00px;text-align:center;letter-spacing:0">设</span><span style="display:inline-block;width:16.00px;text-align:center;letter-spacing:0">置</span><span style="display:inline-block;width:16.00px;text-align:center;letter-spacing:0">工</span><span style="display:inline-block;width:16.00px;text-align:center;letter-spacing:0">具</span><span style="display:inline-block;width:16.00px;text-align:center;letter-spacing:0">链</span></div>
<svg style="position:absolute;left:74px;top:924.5px;" width="20" height="20" viewBox="0 0 20 20"><path d="M4 7l9-3 5 3v10l-9 2.5-5-3z" fill="#dddddd" stroke="#ffffff" stroke-width="1.2"/><path d="M4 7l5 3 9-3M9 10v9" stroke="#555" stroke-width="1"/><path d="M2 2l4 4M6 1l2 4" stroke="#ffffff" stroke-width="1.2"/></svg>
<div style="position:absolute;left:101px;top:925.1px;height:20px;line-height:20px;font-size:16px;color:#cccccc;font-weight:normal;white-space:pre;font-family:'Liberation Sans', sans-serif;letter-spacing:-0.3px;-webkit-text-stroke:0.12px #cccccc;"><span style="display:inline-block;width:16.00px;text-align:center;letter-spacing:0">安</span><span style="display:inline-block;width:16.00px;text-align:center;letter-spacing:0">装</span><span style="display:inline-block;width:16.00px;text-align:center;letter-spacing:0">实</span><span style="display:inline-block;width:16.00px;text-align:center;letter-spacing:0">用</span><span style="display:inline-block;width:16.00px;text-align:center;letter-spacing:0">工</span><span style="display:inline-block;width:16.00px;text-align:center;letter-spacing:0">具</span></div>
<svg style="position:absolute;left:74px;top:952.0px;" width="20" height="20" viewBox="0 0 20 20"><path d="M19.48 8.50 L19.48 11.50 L16.73 11.93 L16.12 13.39 L17.77 15.64 L15.64 17.77 L13.39 16.12 L11.93 16.73 L11.50 19.48 L8.50 19.48 L8.07 16.73 L6.61 16.12 L4.36 17.77 L2.23 15.64 L3.88 13.39 L3.27 11.93 L0.52 11.50 L0.52 8.50 L3.27 8.07 L3.88 6.61 L2.23 4.36 L4.36 2.23 L6.61 3.88 L8.07 3.27 L8.50 0.52 L11.50 0.52 L11.93 3.27 L13.39 3.88 L15.64 2.23 L17.77 4.36 L16.12 6.61 L16.73 8.07z" fill="#3c3c3c" stroke="#f0f0f0" stroke-width="1.3" stroke-linejoin="round"/><circle cx="10" cy="10" r="2.6" fill="#f0f0f0"/></svg>
<div style="position:absolute;left:101px;top:952.6px;height:20px;line-height:20px;font-size:16px;color:#cccccc;font-weight:normal;white-space:pre;font-family:'Liberation Sans', sans-serif;letter-spacing:-0.3px;-webkit-text-stroke:0.12px #cccccc;"><span style="display:inline-block;width:16.00px;text-align:center;letter-spacing:0">打</span><span style="display:inline-block;width:16.00px;text-align:center;letter-spacing:0">开</span><span style="display:inline-block;width:16.00px;text-align:center;letter-spacing:0">插</span><span style="display:inline-block;width:16.00px;text-align:center;letter-spacing:0">件</span><span style="display:inline-block;width:16.00px;text-align:center;letter-spacing:0">设</span><span style="display:inline-block;width:16.00px;text-align:center;letter-spacing:0">置</span></div>
<svg style="position:absolute;left:74px;top:979.5px;" width="20" height="20" viewBox="0 0 20 20"><circle cx="10" cy="10" r="9.2" fill="#1e88e5" stroke="#ffffff" stroke-width="1"/><text x="10" y="15" font-size="13" font-weight="bold" fill="#ffffff" text-anchor="middle" font-family="Liberation Sans">?</text></svg>
<div style="position:absolute;left:101px;top:980.1px;height:20px;line-height:20px;font-size:16px;color:#cccccc;font-weight:normal;white-space:pre;font-family:'Liberation Sans', sans-serif;letter-spacing:-0.3px;-webkit-text-stroke:0.12px #cccccc;"><span style="display:inline-block;width:16.00px;text-align:center;letter-spacing:0">在</span><span style="display:inline-block;width:16.00px;text-align:center;letter-spacing:0">线</span><span style="display:inline-block;width:16.00px;text-align:center;letter-spacing:0">帮</span><span style="display:inline-block;width:16.00px;text-align:center;letter-spacing:0">助</span></div>
<div style="position:absolute;left:60px;top:825px;width:545px;height:1px;background:#2b2b2b;"></div>
<div style="position:absolute;left:60px;top:826px;width:545px;height:27px;background:#181818;"></div>
<div style="position:absolute;left:60px;top:853px;width:545px;height:4px;background:linear-gradient(#0a0a0a,rgba(0,0,0,0));"></div>
<svg style="position:absolute;left:65px;top:834.3px;" width="14" height="8" viewBox="0 0 14 8"><path d="M0.8 0.8L7 7l6.2-6.2" stroke="#cccccc" stroke-width="1.3" fill="none"/></svg>
<div style="position:absolute;left:85px;top:829.6px;height:20px;line-height:20px;font-size:14px;color:#cccccc;font-weight:bold;white-space:pre;font-family:'Liberation Sans', sans-serif;letter-spacing:-0.6px;"><span style="display:inline-block;width:14.00px;text-align:center;letter-spacing:0">操</span><span style="display:inline-block;width:14.00px;text-align:center;letter-spacing:0">作</span></div>
<div style="position:absolute;left:606px;top:44px;width:1314px;height:43px;background:#181818;"></div>
<div style="position:absolute;left:606px;top:86px;width:1314px;height:1px;background:#2b2b2b;"></div>
<div style="position:absolute;left:606px;top:87px;width:1314px;height:916px;background:#1f1f1f;"></div>
<div style="position:absolute;left:755px;top:44px;width:1px;height:43px;background:#2b2b2b;"></div>
<div style="position:absolute;left:646px;top:56.6px;height:20px;line-height:20px;font-size:15.5px;color:#9d9d9d;font-weight:normal;white-space:pre;font-family:'Liberation Sans', sans-serif;letter-spacing:-0.3px;-webkit-text-stroke:0.12px #9d9d9d;"><span style="display:inline-block;width:15.50px;text-align:center;letter-spacing:0">欢</span><span style="display:inline-block;width:15.50px;text-align:center;letter-spacing:0">迎</span></div>
<div style="position:absolute;left:756px;top:44px;width:243px;height:43px;background:#1f1f1f;"></div>
<div style="position:absolute;left:756px;top:44px;width:243px;height:1px;background:#0078d4;"></div>
<div style="position:absolute;left:999px;top:44px;width:1px;height:43px;background:#2b2b2b;"></div>
<div style="position:absolute;left:796px;top:56.6px;height:20px;line-height:20px;font-size:16px;color:#ffffff;font-weight:normal;white-space:pre;font-family:'Liberation Sans', sans-serif;letter-spacing:-0.3px;-webkit-text-stroke:0.12px #ffffff;">Micro_Servo_SG90.map</div>
<svg style="position:absolute;left:974px;top:59px;" width="15" height="15" viewBox="0 0 15 15"><path d="M1.5 1.5l12 12M13.5 1.5l-12 12" stroke="#ffffff" stroke-width="1.6"/></svg>
<svg style="position:absolute;left:618px;top:56px;" width="21" height="21" viewBox="0 0 100 100"><path d="M71 14L11 66" stroke="#0b74c4" stroke-width="15" stroke-linecap="round"/><path d="M71 86L11 34" stroke="#1f8fe3" stroke-width="15" stroke-linecap="round"/><path d="M70 0.5L97 13v74L70 99.5z" fill="#2ba6f2"/></svg>
<svg style="position:absolute;left:769px;top:56px;" width="20" height="20" viewBox="0 0 20 20"><rect x="0.8" y="0.8" width="18.4" height="18.4" fill="#e8e8e8" stroke="#ffffff" stroke-width="1.2"/><rect x="2.5" y="2.5" width="15" height="15" fill="#ececec" stroke="#555" stroke-width="1"/><path d="M4 5.5h11M4 8h6" stroke="#333" stroke-width="1.2"/><path d="M5 15.5v-2M9.5 15.5v-4.5M14 15.5v-6.5" stroke="#222" stroke-width="2.2"/></svg>
<div style="position:absolute;left:626px;top:92.6px;height:20px;line-height:20px;font-size:16px;color:#a9a9a9;font-weight:normal;white-space:pre;font-family:'Liberation Sans', sans-serif;letter-spacing:-0.3px;-webkit-text-stroke:0.12px #a9a9a9;">Micro Servo SG90</div>
<div style="position:absolute;left:774px;top:92.6px;height:20px;line-height:20px;font-size:16px;color:#a9a9a9;font-weight:normal;white-space:pre;font-family:'Liberation Sans', sans-serif;letter-spacing:-0.3px;-webkit-text-stroke:0.12px #a9a9a9;">build</div>
<div style="position:absolute;left:830px;top:92.6px;height:20px;line-height:20px;font-size:16px;color:#a9a9a9;font-weight:normal;white-space:pre;font-family:'Liberation Sans', sans-serif;letter-spacing:-0.3px;-webkit-text-stroke:0.12px #a9a9a9;">Debug</div>
<div style="position:absolute;left:926px;top:92.6px;height:20px;line-height:20px;font-size:16px;color:#a9a9a9;font-weight:normal;white-space:pre;font-family:'Liberation Sans', sans-serif;letter-spacing:-0.3px;-webkit-text-stroke:0.12px #a9a9a9;">Micro_Servo_SG90.map.view</div>
<svg style="position:absolute;left:762px;top:95px;" width="7" height="14" viewBox="0 0 7 14"><path d="M0.8 1l5 6-5 6" stroke="#a9a9a9" stroke-width="1.2" fill="none"/></svg>
<svg style="position:absolute;left:817px;top:95px;" width="7" height="14" viewBox="0 0 7 14"><path d="M0.8 1l5 6-5 6" stroke="#a9a9a9" stroke-width="1.2" fill="none"/></svg>
<svg style="position:absolute;left:885px;top:95px;" width="7" height="14" viewBox="0 0 7 14"><path d="M0.8 1l5 6-5 6" stroke="#a9a9a9" stroke-width="1.2" fill="none"/></svg>
<svg style="position:absolute;left:906px;top:94px;" width="13" height="14" viewBox="0 0 13 14"><path d="M0 1.5h10M0 5h12M0 8.5h10M0 12h7" stroke="#a9a9a9" stroke-width="1.4"/></svg>
<svg style="position:absolute;left:1719px;top:55px;" width="20" height="22" viewBox="0 0 20 22"><rect x="2.5" y="8" width="15" height="12" fill="#3a3a3a"/><path d="M1.6 7v13.6h16.8V7" stroke="#e8e8e8" stroke-width="1.7" fill="none"/><rect x="4.2" y="10.5" width="3" height="2.6" fill="#e8e8e8"/><rect x="8.5" y="10.5" width="3" height="2.6" fill="#e8e8e8"/><rect x="12.8" y="10.5" width="3" height="2.6" fill="#e8e8e8"/><rect x="5.5" y="15.5" width="3.2" height="2.8" fill="#e8e8e8"/><rect x="11.3" y="15.5" width="3.2" height="2.8" fill="#e8e8e8"/><path d="M8.5 1h3v4.5h3L10 10 5.5 5.5h3z" fill="#8a8a8a" stroke="#f0f0f0" stroke-width="1"/></svg>
<svg style="position:absolute;left:1752px;top:55px;" width="17" height="22" viewBox="0 0 17 22"><path d="M8.5 1v15M2.5 10l6 6 6-6" stroke="#ffffff" stroke-width="3" fill="none"/><path d="M8.5 1v15M2.5 10l6 6 6-6" stroke="#2e78d0" stroke-width="1.5" fill="none"/><rect x="1" y="18.5" width="15" height="3" fill="#2e78d0" stroke="#ffffff" stroke-width="0.8"/></svg>
<svg style="position:absolute;left:1786px;top:55px;" width="16" height="22" viewBox="0 0 16 22"><path d="M1.5 1.5L15 11 1.5 20.5z" fill="#3ba23b" stroke="#ffffff" stroke-width="0.8"/></svg>
<svg style="position:absolute;left:1816px;top:56px;" width="20" height="20" viewBox="0 0 20 20"><path d="M2 13.5c-1-1.5 0-3.5 2-5l3.2-2.2 6 6-2.2 3.2c-1.5 2-3.5 3-5 2z" fill="#f0f0f0"/><path d="M7 6l6.5 6.5" stroke="#181818" stroke-width="1.2"/><path d="M8.5 5.5l3 3" stroke="#f0f0f0" stroke-width="2.5"/><path d="M11 8l7.5-7.5" stroke="#f0f0f0" stroke-width="1.6"/></svg>
<svg style="position:absolute;left:1849px;top:56px;" width="19" height="20" viewBox="0 0 19 20"><rect x="1" y="1" width="17" height="18" rx="2.5" stroke="#cccccc" stroke-width="1.5" fill="none"/><path d="M9.5 1v18" stroke="#cccccc" stroke-width="1.5"/></svg>
<svg style="position:absolute;left:1883px;top:64px;" width="16" height="4" viewBox="0 0 16 4"><circle cx="2" cy="2" r="1.5" fill="#cccccc"/><circle cx="8" cy="2" r="1.5" fill="#cccccc"/><circle cx="14" cy="2" r="1.5" fill="#cccccc"/></svg>
<div style="position:absolute;left:631px;top:128px;width:73px;height:33px;background:#1f1f1f;border:1px solid #2b2b2b;border-bottom:none;"></div>
<div style="position:absolute;left:631px;top:161px;width:75px;height:2px;background:#0078d4;"></div>
<div style="position:absolute;left:712px;top:128px;width:73px;height:33px;background:#181818;border:1px solid #2b2b2b;"></div>
<div style="position:absolute;left:645px;top:136.7px;height:20px;line-height:20px;font-size:16px;color:#ffffff;font-weight:normal;white-space:pre;font-family:'Liberation Mono', monospace;letter-spacing:0px;-webkit-text-stroke:0.5px #ffffff;">Table</div>
<div style="position:absolute;left:726px;top:136.7px;height:20px;line-height:20px;font-size:16px;color:#a8a8a8;font-weight:normal;white-space:pre;font-family:'Liberation Mono', monospace;letter-spacing:0px;">Graph</div>
<div style="font-family:'Liberation Mono', monospace;font-size:16px;line-height:20px;height:20px;color:#cccccc;white-space:pre;position:absolute;left:632.00px;top:181.5px;">Unknown object name found in GCC map file: load address 0x080041fc</div>
<div style="font-family:'Liberation Mono', monospace;font-size:16px;line-height:20px;height:20px;color:#cccccc;white-space:pre;position:absolute;left:632.00px;top:201.5px;">Unknown object name found in GCC map file: load address 0x080041fc</div>
<div style="font-family:'Liberation Mono', monospace;font-size:16px;line-height:20px;height:20px;color:#cccccc;white-space:pre;position:absolute;left:651.24px;top:221.5px;">Module</div>
<div style="font-family:'Liberation Mono', monospace;font-size:16px;line-height:20px;height:20px;color:#cccccc;white-space:pre;position:absolute;right:604.84px;top:221.5px;text-align:right;">.text</div>
<div style="font-family:'Liberation Mono', monospace;font-size:16px;line-height:20px;height:20px;color:#cccccc;white-space:pre;position:absolute;right:508.62px;top:221.5px;text-align:right;">.data</div>
<div style="font-family:'Liberation Mono', monospace;font-size:16px;line-height:20px;height:20px;color:#cccccc;white-space:pre;position:absolute;right:412.40px;top:221.5px;text-align:right;">.bss</div>
<div style="font-family:'Liberation Mono', monospace;font-size:16px;line-height:20px;height:20px;color:#cccccc;white-space:pre;position:absolute;left:641.62px;top:241.5px;width:567.70px;overflow:hidden;">-----------------------------------------------------------</div>
<div style="font-family:'Liberation Mono', monospace;font-size:16px;line-height:20px;height:20px;color:#cccccc;white-space:pre;position:absolute;left:1218.94px;top:241.5px;width:105.84px;overflow:hidden;">-----------</div>
<div style="font-family:'Liberation Mono', monospace;font-size:16px;line-height:20px;height:20px;color:#cccccc;white-space:pre;position:absolute;left:1334.41px;top:241.5px;width:86.60px;overflow:hidden;">---------</div>
<div style="font-family:'Liberation Mono', monospace;font-size:16px;line-height:20px;height:20px;color:#cccccc;white-space:pre;position:absolute;left:1430.63px;top:241.5px;width:86.60px;overflow:hidden;">---------</div>
<div style="font-family:'Liberation Mono', monospace;font-size:16px;line-height:20px;height:20px;color:#cccccc;white-space:pre;position:absolute;left:651.24px;top:261.5px;">APP\GPIO_Init\GPIO_Init.o</div>
<div style="font-family:'Liberation Mono', monospace;font-size:16px;line-height:20px;height:20px;color:#cccccc;white-space:pre;position:absolute;right:604.84px;top:261.5px;text-align:right;">40(+0)</div>
<div style="font-family:'Liberation Mono', monospace;font-size:16px;line-height:20px;height:20px;color:#cccccc;white-space:pre;position:absolute;right:508.62px;top:261.5px;text-align:right;">0(+0)</div>
<div style="font-family:'Liberation Mono', monospace;font-size:16px;line-height:20px;height:20px;color:#cccccc;white-space:pre;position:absolute;right:412.40px;top:261.5px;text-align:right;">0(+0)</div>
<div style="font-family:'Liberation Mono', monospace;font-size:16px;line-height:20px;height:20px;color:#cccccc;white-space:pre;position:absolute;left:651.24px;top:281.5px;">APP\pwm\pwm.o</div>
<div style="font-family:'Liberation Mono', monospace;font-size:16px;line-height:20px;height:20px;color:#cccccc;white-space:pre;position:absolute;right:604.84px;top:281.5px;text-align:right;">100(+0)</div>
<div style="font-family:'Liberation Mono', monospace;font-size:16px;line-height:20px;height:20px;color:#cccccc;white-space:pre;position:absolute;right:508.62px;top:281.5px;text-align:right;">0(+0)</div>
<div style="font-family:'Liberation Mono', monospace;font-size:16px;line-height:20px;height:20px;color:#cccccc;white-space:pre;position:absolute;right:412.40px;top:281.5px;text-align:right;">0(+0)</div>
<div style="font-family:'Liberation Mono', monospace;font-size:16px;line-height:20px;height:20px;color:#cccccc;white-space:pre;position:absolute;left:651.24px;top:301.5px;">Libraries\STM32F10x_StdPeriph_Driver\src\misc.o</div>
<div style="font-family:'Liberation Mono', monospace;font-size:16px;line-height:20px;height:20px;color:#cccccc;white-space:pre;position:absolute;right:604.84px;top:301.5px;text-align:right;">24(+0)</div>
<div style="font-family:'Liberation Mono', monospace;font-size:16px;line-height:20px;height:20px;color:#cccccc;white-space:pre;position:absolute;right:508.62px;top:301.5px;text-align:right;">0(+0)</div>
<div style="font-family:'Liberation Mono', monospace;font-size:16px;line-height:20px;height:20px;color:#cccccc;white-space:pre;position:absolute;right:412.40px;top:301.5px;text-align:right;">0(+0)</div>
<div style="font-family:'Liberation Mono', monospace;font-size:16px;line-height:20px;height:20px;color:#cccccc;white-space:pre;position:absolute;left:651.24px;top:321.5px;">Libraries\STM32F10x_StdPeriph_Driver\src\stm32f10x_gpio.o</div>
<div style="font-family:'Liberation Mono', monospace;font-size:16px;line-height:20px;height:20px;color:#cccccc;white-space:pre;position:absolute;right:604.84px;top:321.5px;text-align:right;">188(+0)</div>
<div style="font-family:'Liberation Mono', monospace;font-size:16px;line-height:20px;height:20px;color:#cccccc;white-space:pre;position:absolute;right:508.62px;top:321.5px;text-align:right;">0(+0)</div>
<div style="font-family:'Liberation Mono', monospace;font-size:16px;line-height:20px;height:20px;color:#cccccc;white-space:pre;position:absolute;right:412.40px;top:321.5px;text-align:right;">0(+0)</div>
<div style="font-family:'Liberation Mono', monospace;font-size:16px;line-height:20px;height:20px;color:#cccccc;white-space:pre;position:absolute;left:651.24px;top:341.5px;">Libraries\STM32F10x_StdPeriph_Driver\src\stm32f10x_rcc.o</div>
<div style="font-family:'Liberation Mono', monospace;font-size:16px;line-height:20px;height:20px;color:#cccccc;white-space:pre;position:absolute;right:604.84px;top:341.5px;text-align:right;">48(+0)</div>
<div style="font-family:'Liberation Mono', monospace;font-size:16px;line-height:20px;height:20px;color:#cccccc;white-space:pre;position:absolute;right:508.62px;top:341.5px;text-align:right;">0(+0)</div>
<div style="font-family:'Liberation Mono', monospace;font-size:16px;line-height:20px;height:20px;color:#cccccc;white-space:pre;position:absolute;right:412.40px;top:341.5px;text-align:right;">0(+0)</div>
<div style="font-family:'Liberation Mono', monospace;font-size:16px;line-height:20px;height:20px;color:#cccccc;white-space:pre;position:absolute;left:651.24px;top:361.5px;">Libraries\STM32F10x_StdPeriph_Driver\src\stm32f10x_tim.o</div>
<div style="font-family:'Liberation Mono', monospace;font-size:16px;line-height:20px;height:20px;color:#cccccc;white-space:pre;position:absolute;right:604.84px;top:361.5px;text-align:right;">436(+0)</div>
<div style="font-family:'Liberation Mono', monospace;font-size:16px;line-height:20px;height:20px;color:#cccccc;white-space:pre;position:absolute;right:508.62px;top:361.5px;text-align:right;">0(+0)</div>
<div style="font-family:'Liberation Mono', monospace;font-size:16px;line-height:20px;height:20px;color:#cccccc;white-space:pre;position:absolute;right:412.40px;top:361.5px;text-align:right;">0(+0)</div>
<div style="font-family:'Liberation Mono', monospace;font-size:16px;line-height:20px;height:20px;color:#cccccc;white-space:pre;position:absolute;left:651.24px;top:381.5px;">Public\SysTick.o</div>
<div style="font-family:'Liberation Mono', monospace;font-size:16px;line-height:20px;height:20px;color:#cccccc;white-space:pre;position:absolute;right:604.84px;top:381.5px;text-align:right;">100(+0)</div>
<div style="font-family:'Liberation Mono', monospace;font-size:16px;line-height:20px;height:20px;color:#cccccc;white-space:pre;position:absolute;right:508.62px;top:381.5px;text-align:right;">0(+0)</div>
<div style="font-family:'Liberation Mono', monospace;font-size:16px;line-height:20px;height:20px;color:#cccccc;white-space:pre;position:absolute;right:412.40px;top:381.5px;text-align:right;">3(+0)</div>
<div style="font-family:'Liberation Mono', monospace;font-size:16px;line-height:20px;height:20px;color:#cccccc;white-space:pre;position:absolute;left:651.24px;top:401.5px;">User\Src\main.o</div>
<div style="font-family:'Liberation Mono', monospace;font-size:16px;line-height:20px;height:20px;color:#cccccc;white-space:pre;position:absolute;right:604.84px;top:401.5px;text-align:right;">152(+0)</div>
<div style="font-family:'Liberation Mono', monospace;font-size:16px;line-height:20px;height:20px;color:#cccccc;white-space:pre;position:absolute;right:508.62px;top:401.5px;text-align:right;">0(+0)</div>
<div style="font-family:'Liberation Mono', monospace;font-size:16px;line-height:20px;height:20px;color:#cccccc;white-space:pre;position:absolute;right:412.40px;top:401.5px;text-align:right;">0(+0)</div>
<div style="font-family:'Liberation Mono', monospace;font-size:16px;line-height:20px;height:20px;color:#cccccc;white-space:pre;position:absolute;left:651.24px;top:421.5px;">User\Src\stm32f10x_it.o</div>
<div style="font-family:'Liberation Mono', monospace;font-size:16px;line-height:20px;height:20px;color:#cccccc;white-space:pre;position:absolute;right:604.84px;top:421.5px;text-align:right;">36(+0)</div>
<div style="font-family:'Liberation Mono', monospace;font-size:16px;line-height:20px;height:20px;color:#cccccc;white-space:pre;position:absolute;right:508.62px;top:421.5px;text-align:right;">0(+0)</div>
<div style="font-family:'Liberation Mono', monospace;font-size:16px;line-height:20px;height:20px;color:#cccccc;white-space:pre;position:absolute;right:412.40px;top:421.5px;text-align:right;">0(+0)</div>
<div style="font-family:'Liberation Mono', monospace;font-size:16px;line-height:20px;height:20px;color:#cccccc;white-space:pre;position:absolute;left:651.24px;top:441.5px;">User\Src\syscall.o</div>
<div style="font-family:'Liberation Mono', monospace;font-size:16px;line-height:20px;height:20px;color:#cccccc;white-space:pre;position:absolute;right:604.84px;top:441.5px;text-align:right;">120(+0)</div>
<div style="font-family:'Liberation Mono', monospace;font-size:16px;line-height:20px;height:20px;color:#cccccc;white-space:pre;position:absolute;right:508.62px;top:441.5px;text-align:right;">0(+0)</div>
<div style="font-family:'Liberation Mono', monospace;font-size:16px;line-height:20px;height:20px;color:#cccccc;white-space:pre;position:absolute;right:412.40px;top:441.5px;text-align:right;">0(+0)</div>
<div style="font-family:'Liberation Mono', monospace;font-size:16px;line-height:20px;height:20px;color:#cccccc;white-space:pre;position:absolute;left:651.24px;top:461.5px;">User\Src\sysmem.o</div>
<div style="font-family:'Liberation Mono', monospace;font-size:16px;line-height:20px;height:20px;color:#cccccc;white-space:pre;position:absolute;right:604.84px;top:461.5px;text-align:right;">72(+0)</div>
<div style="font-family:'Liberation Mono', monospace;font-size:16px;line-height:20px;height:20px;color:#cccccc;white-space:pre;position:absolute;right:508.62px;top:461.5px;text-align:right;">0(+0)</div>
<div style="font-family:'Liberation Mono', monospace;font-size:16px;line-height:20px;height:20px;color:#cccccc;white-space:pre;position:absolute;right:412.40px;top:461.5px;text-align:right;">4(+0)</div>
<div style="font-family:'Liberation Mono', monospace;font-size:16px;line-height:20px;height:20px;color:#cccccc;white-space:pre;position:absolute;left:651.24px;top:481.5px;">User\Src\system_stm32f10x.o</div>
<div style="font-family:'Liberation Mono', monospace;font-size:16px;line-height:20px;height:20px;color:#cccccc;white-space:pre;position:absolute;right:604.84px;top:481.5px;text-align:right;">256(+0)</div>
<div style="font-family:'Liberation Mono', monospace;font-size:16px;line-height:20px;height:20px;color:#cccccc;white-space:pre;position:absolute;right:508.62px;top:481.5px;text-align:right;">0(+0)</div>
<div style="font-family:'Liberation Mono', monospace;font-size:16px;line-height:20px;height:20px;color:#cccccc;white-space:pre;position:absolute;right:412.40px;top:481.5px;text-align:right;">0(+0)</div>
<div style="font-family:'Liberation Mono', monospace;font-size:16px;line-height:20px;height:20px;color:#cccccc;white-space:pre;position:absolute;left:651.24px;top:501.5px;">User\Startup\startup_stm32f10x_hd.o</div>
<div style="font-family:'Liberation Mono', monospace;font-size:16px;line-height:20px;height:20px;color:#cccccc;white-space:pre;position:absolute;right:604.84px;top:501.5px;text-align:right;">70(+0)</div>
<div style="font-family:'Liberation Mono', monospace;font-size:16px;line-height:20px;height:20px;color:#cccccc;white-space:pre;position:absolute;right:508.62px;top:501.5px;text-align:right;">0(+0)</div>
<div style="font-family:'Liberation Mono', monospace;font-size:16px;line-height:20px;height:20px;color:#cccccc;white-space:pre;position:absolute;right:412.40px;top:501.5px;text-align:right;">0(+0)</div>
<div style="font-family:'Liberation Mono', monospace;font-size:16px;line-height:20px;height:20px;color:#cccccc;white-space:pre;position:absolute;left:651.24px;top:521.5px;">[fill]</div>
<div style="font-family:'Liberation Mono', monospace;font-size:16px;line-height:20px;height:20px;color:#cccccc;white-space:pre;position:absolute;right:604.84px;top:521.5px;text-align:right;">18(+0)</div>
<div style="font-family:'Liberation Mono', monospace;font-size:16px;line-height:20px;height:20px;color:#cccccc;white-space:pre;position:absolute;right:508.62px;top:521.5px;text-align:right;">0(+0)</div>
<div style="font-family:'Liberation Mono', monospace;font-size:16px;line-height:20px;height:20px;color:#cccccc;white-space:pre;position:absolute;right:412.40px;top:521.5px;text-align:right;">6(+0)</div>
<div style="font-family:'Liberation Mono', monospace;font-size:16px;line-height:20px;height:20px;color:#cccccc;white-space:pre;position:absolute;left:651.24px;top:541.5px;">[lib]\c_nano.a\libc_a-abort.o</div>
<div style="font-family:'Liberation Mono', monospace;font-size:16px;line-height:20px;height:20px;color:#cccccc;white-space:pre;position:absolute;right:604.84px;top:541.5px;text-align:right;">14(+0)</div>
<div style="font-family:'Liberation Mono', monospace;font-size:16px;line-height:20px;height:20px;color:#cccccc;white-space:pre;position:absolute;right:508.62px;top:541.5px;text-align:right;">0(+0)</div>
<div style="font-family:'Liberation Mono', monospace;font-size:16px;line-height:20px;height:20px;color:#cccccc;white-space:pre;position:absolute;right:412.40px;top:541.5px;text-align:right;">0(+0)</div>
<div style="font-family:'Liberation Mono', monospace;font-size:16px;line-height:20px;height:20px;color:#cccccc;white-space:pre;position:absolute;left:651.24px;top:561.5px;">[lib]\c_nano.a\libc_a-assert.o</div>
<div style="font-family:'Liberation Mono', monospace;font-size:16px;line-height:20px;height:20px;color:#cccccc;white-space:pre;position:absolute;right:604.84px;top:561.5px;text-align:right;">121(+0)</div>
<div style="font-family:'Liberation Mono', monospace;font-size:16px;line-height:20px;height:20px;color:#cccccc;white-space:pre;position:absolute;right:508.62px;top:561.5px;text-align:right;">0(+0)</div>
<div style="font-family:'Liberation Mono', monospace;font-size:16px;line-height:20px;height:20px;color:#cccccc;white-space:pre;position:absolute;right:412.40px;top:561.5px;text-align:right;">0(+0)</div>
<div style="font-family:'Liberation Mono', monospace;font-size:16px;line-height:20px;height:20px;color:#cccccc;white-space:pre;position:absolute;left:651.24px;top:581.5px;">[lib]\c_nano.a\libc_a-callocr.o</div>
<div style="font-family:'Liberation Mono', monospace;font-size:16px;line-height:20px;height:20px;color:#cccccc;white-space:pre;position:absolute;right:604.84px;top:581.5px;text-align:right;">40(+0)</div>
<div style="font-family:'Liberation Mono', monospace;font-size:16px;line-height:20px;height:20px;color:#cccccc;white-space:pre;position:absolute;right:508.62px;top:581.5px;text-align:right;">0(+0)</div>
<div style="font-family:'Liberation Mono', monospace;font-size:16px;line-height:20px;height:20px;color:#cccccc;white-space:pre;position:absolute;right:412.40px;top:581.5px;text-align:right;">0(+0)</div>
<div style="font-family:'Liberation Mono', monospace;font-size:16px;line-height:20px;height:20px;color:#cccccc;white-space:pre;position:absolute;left:651.24px;top:601.5px;">[lib]\c_nano.a\libc_a-closer.o</div>
<div style="font-family:'Liberation Mono', monospace;font-size:16px;line-height:20px;height:20px;color:#cccccc;white-space:pre;position:absolute;right:604.84px;top:601.5px;text-align:right;">32(+0)</div>
<div style="font-family:'Liberation Mono', monospace;font-size:16px;line-height:20px;height:20px;color:#cccccc;white-space:pre;position:absolute;right:508.62px;top:601.5px;text-align:right;">0(+0)</div>
<div style="font-family:'Liberation Mono', monospace;font-size:16px;line-height:20px;height:20px;color:#cccccc;white-space:pre;position:absolute;right:412.40px;top:601.5px;text-align:right;">0(+0)</div>
<div style="font-family:'Liberation Mono', monospace;font-size:16px;line-height:20px;height:20px;color:#cccccc;white-space:pre;position:absolute;left:651.24px;top:621.5px;">[lib]\c_nano.a\libc_a-ctype_.o</div>
<div style="font-family:'Liberation Mono', monospace;font-size:16px;line-height:20px;height:20px;color:#cccccc;white-space:pre;position:absolute;right:604.84px;top:621.5px;text-align:right;">257(+0)</div>
<div style="font-family:'Liberation Mono', monospace;font-size:16px;line-height:20px;height:20px;color:#cccccc;white-space:pre;position:absolute;right:508.62px;top:621.5px;text-align:right;">0(+0)</div>
<div style="font-family:'Liberation Mono', monospace;font-size:16px;line-height:20px;height:20px;color:#cccccc;white-space:pre;position:absolute;right:412.40px;top:621.5px;text-align:right;">0(+0)</div>
<div style="font-family:'Liberation Mono', monospace;font-size:16px;line-height:20px;height:20px;color:#cccccc;white-space:pre;position:absolute;left:651.24px;top:641.5px;">[lib]\c_nano.a\libc_a-dtoa.o</div>
<div style="font-family:'Liberation Mono', monospace;font-size:16px;line-height:20px;height:20px;color:#cccccc;white-space:pre;position:absolute;right:604.84px;top:641.5px;text-align:right;">3438(+0)</div>
<div style="font-family:'Liberation Mono', monospace;font-size:16px;line-height:20px;height:20px;color:#cccccc;white-space:pre;position:absolute;right:508.62px;top:641.5px;text-align:right;">0(+0)</div>
<div style="font-family:'Liberation Mono', monospace;font-size:16px;line-height:20px;height:20px;color:#cccccc;white-space:pre;position:absolute;right:412.40px;top:641.5px;text-align:right;">0(+0)</div>
<div style="font-family:'Liberation Mono', monospace;font-size:16px;line-height:20px;height:20px;color:#cccccc;white-space:pre;position:absolute;left:651.24px;top:661.5px;">[lib]\c_nano.a\libc_a-errno.o</div>
<div style="font-family:'Liberation Mono', monospace;font-size:16px;line-height:20px;height:20px;color:#cccccc;white-space:pre;position:absolute;right:604.84px;top:661.5px;text-align:right;">12(+0)</div>
<div style="font-family:'Liberation Mono', monospace;font-size:16px;line-height:20px;height:20px;color:#cccccc;white-space:pre;position:absolute;right:508.62px;top:661.5px;text-align:right;">0(+0)</div>
<div style="font-family:'Liberation Mono', monospace;font-size:16px;line-height:20px;height:20px;color:#cccccc;white-space:pre;position:absolute;right:412.40px;top:661.5px;text-align:right;">0(+0)</div>
<div style="font-family:'Liberation Mono', monospace;font-size:16px;line-height:20px;height:20px;color:#cccccc;white-space:pre;position:absolute;left:651.24px;top:681.5px;">[lib]\c_nano.a\libc_a-fflush.o</div>
<div style="font-family:'Liberation Mono', monospace;font-size:16px;line-height:20px;height:20px;color:#cccccc;white-space:pre;position:absolute;right:604.84px;top:681.5px;text-align:right;">332(+0)</div>
<div style="font-family:'Liberation Mono', monospace;font-size:16px;line-height:20px;height:20px;color:#cccccc;white-space:pre;position:absolute;right:508.62px;top:681.5px;text-align:right;">0(+0)</div>
<div style="font-family:'Liberation Mono', monospace;font-size:16px;line-height:20px;height:20px;color:#cccccc;white-space:pre;position:absolute;right:412.40px;top:681.5px;text-align:right;">0(+0)</div>
<div style="font-family:'Liberation Mono', monospace;font-size:16px;line-height:20px;height:20px;color:#cccccc;white-space:pre;position:absolute;left:651.24px;top:701.5px;">[lib]\c_nano.a\libc_a-findfp.o</div>
<div style="font-family:'Liberation Mono', monospace;font-size:16px;line-height:20px;height:20px;color:#cccccc;white-space:pre;position:absolute;right:604.84px;top:701.5px;text-align:right;">332(+0)</div>
<div style="font-family:'Liberation Mono', monospace;font-size:16px;line-height:20px;height:20px;color:#cccccc;white-space:pre;position:absolute;right:508.62px;top:701.5px;text-align:right;">12(+0)</div>
<div style="font-family:'Liberation Mono', monospace;font-size:16px;line-height:20px;height:20px;color:#cccccc;white-space:pre;position:absolute;right:412.40px;top:701.5px;text-align:right;">316(+0)</div>
<div style="font-family:'Liberation Mono', monospace;font-size:16px;line-height:20px;height:20px;color:#cccccc;white-space:pre;position:absolute;left:651.24px;top:721.5px;">[lib]\c_nano.a\libc_a-fprintf.o</div>
<div style="font-family:'Liberation Mono', monospace;font-size:16px;line-height:20px;height:20px;color:#cccccc;white-space:pre;position:absolute;right:604.84px;top:721.5px;text-align:right;">36(+0)</div>
<div style="font-family:'Liberation Mono', monospace;font-size:16px;line-height:20px;height:20px;color:#cccccc;white-space:pre;position:absolute;right:508.62px;top:721.5px;text-align:right;">0(+0)</div>
<div style="font-family:'Liberation Mono', monospace;font-size:16px;line-height:20px;height:20px;color:#cccccc;white-space:pre;position:absolute;right:412.40px;top:721.5px;text-align:right;">0(+0)</div>
<div style="font-family:'Liberation Mono', monospace;font-size:16px;line-height:20px;height:20px;color:#cccccc;white-space:pre;position:absolute;left:651.24px;top:741.5px;">[lib]\c_nano.a\libc_a-freer.o</div>
<div style="font-family:'Liberation Mono', monospace;font-size:16px;line-height:20px;height:20px;color:#cccccc;white-space:pre;position:absolute;right:604.84px;top:741.5px;text-align:right;">144(+0)</div>
<div style="font-family:'Liberation Mono', monospace;font-size:16px;line-height:20px;height:20px;color:#cccccc;white-space:pre;position:absolute;right:508.62px;top:741.5px;text-align:right;">0(+0)</div>
<div style="font-family:'Liberation Mono', monospace;font-size:16px;line-height:20px;height:20px;color:#cccccc;white-space:pre;position:absolute;right:412.40px;top:741.5px;text-align:right;">0(+0)</div>
<div style="font-family:'Liberation Mono', monospace;font-size:16px;line-height:20px;height:20px;color:#cccccc;white-space:pre;position:absolute;left:651.24px;top:761.5px;">[lib]\c_nano.a\libc_a-fstatr.o</div>
<div style="font-family:'Liberation Mono', monospace;font-size:16px;line-height:20px;height:20px;color:#cccccc;white-space:pre;position:absolute;right:604.84px;top:761.5px;text-align:right;">36(+0)</div>
<div style="font-family:'Liberation Mono', monospace;font-size:16px;line-height:20px;height:20px;color:#cccccc;white-space:pre;position:absolute;right:508.62px;top:761.5px;text-align:right;">0(+0)</div>
<div style="font-family:'Liberation Mono', monospace;font-size:16px;line-height:20px;height:20px;color:#cccccc;white-space:pre;position:absolute;right:412.40px;top:761.5px;text-align:right;">0(+0)</div>
<div style="font-family:'Liberation Mono', monospace;font-size:16px;line-height:20px;height:20px;color:#cccccc;white-space:pre;position:absolute;left:651.24px;top:781.5px;">[lib]\c_nano.a\libc_a-fwalk.o</div>
<div style="font-family:'Liberation Mono', monospace;font-size:16px;line-height:20px;height:20px;color:#cccccc;white-space:pre;position:absolute;right:604.84px;top:781.5px;text-align:right;">60(+0)</div>
<div style="font-family:'Liberation Mono', monospace;font-size:16px;line-height:20px;height:20px;color:#cccccc;white-space:pre;position:absolute;right:508.62px;top:781.5px;text-align:right;">0(+0)</div>
<div style="font-family:'Liberation Mono', monospace;font-size:16px;line-height:20px;height:20px;color:#cccccc;white-space:pre;position:absolute;right:412.40px;top:781.5px;text-align:right;">0(+0)</div>
<div style="font-family:'Liberation Mono', monospace;font-size:16px;line-height:20px;height:20px;color:#cccccc;white-space:pre;position:absolute;left:651.24px;top:801.5px;">[lib]\c_nano.a\libc_a-impure.o</div>
<div style="font-family:'Liberation Mono', monospace;font-size:16px;line-height:20px;height:20px;color:#cccccc;white-space:pre;position:absolute;right:604.84px;top:801.5px;text-align:right;">0(+0)</div>
<div style="font-family:'Liberation Mono', monospace;font-size:16px;line-height:20px;height:20px;color:#cccccc;white-space:pre;position:absolute;right:508.62px;top:801.5px;text-align:right;">80(+0)</div>
<div style="font-family:'Liberation Mono', monospace;font-size:16px;line-height:20px;height:20px;color:#cccccc;white-space:pre;position:absolute;right:412.40px;top:801.5px;text-align:right;">0(+0)</div>
<div style="font-family:'Liberation Mono', monospace;font-size:16px;line-height:20px;height:20px;color:#cccccc;white-space:pre;position:absolute;left:651.24px;top:821.5px;">[lib]\c_nano.a\libc_a-isattyr.o</div>
<div style="font-family:'Liberation Mono', monospace;font-size:16px;line-height:20px;height:20px;color:#cccccc;white-space:pre;position:absolute;right:604.84px;top:821.5px;text-align:right;">32(+0)</div>
<div style="font-family:'Liberation Mono', monospace;font-size:16px;line-height:20px;height:20px;color:#cccccc;white-space:pre;position:absolute;right:508.62px;top:821.5px;text-align:right;">0(+0)</div>
<div style="font-family:'Liberation Mono', monospace;font-size:16px;line-height:20px;height:20px;color:#cccccc;white-space:pre;position:absolute;right:412.40px;top:821.5px;text-align:right;">0(+0)</div>
<div style="font-family:'Liberation Mono', monospace;font-size:16px;line-height:20px;height:20px;color:#cccccc;white-space:pre;position:absolute;left:651.24px;top:841.5px;">[lib]\c_nano.a\libc_a-locale.o</div>
<div style="font-family:'Liberation Mono', monospace;font-size:16px;line-height:20px;height:20px;color:#cccccc;white-space:pre;position:absolute;right:604.84px;top:841.5px;text-align:right;">11(+0)</div>
<div style="font-family:'Liberation Mono', monospace;font-size:16px;line-height:20px;height:20px;color:#cccccc;white-space:pre;position:absolute;right:508.62px;top:841.5px;text-align:right;">364(+0)</div>
<div style="font-family:'Liberation Mono', monospace;font-size:16px;line-height:20px;height:20px;color:#cccccc;white-space:pre;position:absolute;right:412.40px;top:841.5px;text-align:right;">0(+0)</div>
<div style="font-family:'Liberation Mono', monospace;font-size:16px;line-height:20px;height:20px;color:#cccccc;white-space:pre;position:absolute;left:651.24px;top:861.5px;">[lib]\c_nano.a\libc_a-localeconv.o</div>
<div style="font-family:'Liberation Mono', monospace;font-size:16px;line-height:20px;height:20px;color:#cccccc;white-space:pre;position:absolute;right:604.84px;top:861.5px;text-align:right;">8(+0)</div>
<div style="font-family:'Liberation Mono', monospace;font-size:16px;line-height:20px;height:20px;color:#cccccc;white-space:pre;position:absolute;right:508.62px;top:861.5px;text-align:right;">0(+0)</div>
<div style="font-family:'Liberation Mono', monospace;font-size:16px;line-height:20px;height:20px;color:#cccccc;white-space:pre;position:absolute;right:412.40px;top:861.5px;text-align:right;">0(+0)</div>
<div style="font-family:'Liberation Mono', monospace;font-size:16px;line-height:20px;height:20px;color:#cccccc;white-space:pre;position:absolute;left:651.24px;top:881.5px;">[lib]\c_nano.a\libc_a-lock.o</div>
<div style="font-family:'Liberation Mono', monospace;font-size:16px;line-height:20px;height:20px;color:#cccccc;white-space:pre;position:absolute;right:604.84px;top:881.5px;text-align:right;">6(+0)</div>
<div style="font-family:'Liberation Mono', monospace;font-size:16px;line-height:20px;height:20px;color:#cccccc;white-space:pre;position:absolute;right:508.62px;top:881.5px;text-align:right;">0(+0)</div>
<div style="font-family:'Liberation Mono', monospace;font-size:16px;line-height:20px;height:20px;color:#cccccc;white-space:pre;position:absolute;right:412.40px;top:881.5px;text-align:right;">2(+0)</div>
<div style="font-family:'Liberation Mono', monospace;font-size:16px;line-height:20px;height:20px;color:#cccccc;white-space:pre;position:absolute;left:651.24px;top:901.5px;">[lib]\c_nano.a\libc_a-lseekr.o</div>
<div style="font-family:'Liberation Mono', monospace;font-size:16px;line-height:20px;height:20px;color:#cccccc;white-space:pre;position:absolute;right:604.84px;top:901.5px;text-align:right;">36(+0)</div>
<div style="font-family:'Liberation Mono', monospace;font-size:16px;line-height:20px;height:20px;color:#cccccc;white-space:pre;position:absolute;right:508.62px;top:901.5px;text-align:right;">0(+0)</div>
<div style="font-family:'Liberation Mono', monospace;font-size:16px;line-height:20px;height:20px;color:#cccccc;white-space:pre;position:absolute;right:412.40px;top:901.5px;text-align:right;">0(+0)</div>
<div style="font-family:'Liberation Mono', monospace;font-size:16px;line-height:20px;height:20px;color:#cccccc;white-space:pre;position:absolute;left:651.24px;top:921.5px;">[lib]\c_nano.a\libc_a-makebuf.o</div>
<div style="font-family:'Liberation Mono', monospace;font-size:16px;line-height:20px;height:20px;color:#cccccc;white-space:pre;position:absolute;right:604.84px;top:921.5px;text-align:right;">186(+0)</div>
<div style="font-family:'Liberation Mono', monospace;font-size:16px;line-height:20px;height:20px;color:#cccccc;white-space:pre;position:absolute;right:508.62px;top:921.5px;text-align:right;">0(+0)</div>
<div style="font-family:'Liberation Mono', monospace;font-size:16px;line-height:20px;height:20px;color:#cccccc;white-space:pre;position:absolute;right:412.40px;top:921.5px;text-align:right;">0(+0)</div>
<div style="font-family:'Liberation Mono', monospace;font-size:16px;line-height:20px;height:20px;color:#cccccc;white-space:pre;position:absolute;left:651.24px;top:941.5px;">[lib]\c_nano.a\libc_a-malloc.o</div>
<div style="font-family:'Liberation Mono', monospace;font-size:16px;line-height:20px;height:20px;color:#cccccc;white-space:pre;position:absolute;right:604.84px;top:941.5px;text-align:right;">16(+0)</div>
<div style="font-family:'Liberation Mono', monospace;font-size:16px;line-height:20px;height:20px;color:#cccccc;white-space:pre;position:absolute;right:508.62px;top:941.5px;text-align:right;">0(+0)</div>
<div style="font-family:'Liberation Mono', monospace;font-size:16px;line-height:20px;height:20px;color:#cccccc;white-space:pre;position:absolute;right:412.40px;top:941.5px;text-align:right;">0(+0)</div>
<div style="font-family:'Liberation Mono', monospace;font-size:16px;line-height:20px;height:20px;color:#cccccc;white-space:pre;position:absolute;left:651.24px;top:961.5px;">[lib]\c_nano.a\libc_a-mallocr.o</div>
<div style="font-family:'Liberation Mono', monospace;font-size:16px;line-height:20px;height:20px;color:#cccccc;white-space:pre;position:absolute;right:604.84px;top:961.5px;text-align:right;">324(+0)</div>
<div style="font-family:'Liberation Mono', monospace;font-size:16px;line-height:20px;height:20px;color:#cccccc;white-space:pre;position:absolute;right:508.62px;top:961.5px;text-align:right;">0(+0)</div>
<div style="font-family:'Liberation Mono', monospace;font-size:16px;line-height:20px;height:20px;color:#cccccc;white-space:pre;position:absolute;right:412.40px;top:961.5px;text-align:right;">8(+0)</div>
<div style="font-family:'Liberation Mono', monospace;font-size:16px;line-height:20px;height:20px;color:#cccccc;white-space:pre;position:absolute;left:651.24px;top:981.5px;">[lib]\c_nano.a\libc_a-mbtowc_r.o</div>
<div style="font-family:'Liberation Mono', monospace;font-size:16px;line-height:20px;height:20px;color:#cccccc;white-space:pre;position:absolute;right:604.84px;top:981.5px;text-align:right;">36(+0)</div>
<div style="font-family:'Liberation Mono', monospace;font-size:16px;line-height:20px;height:20px;color:#cccccc;white-space:pre;position:absolute;right:508.62px;top:981.5px;text-align:right;">0(+0)</div>
<div style="font-family:'Liberation Mono', monospace;font-size:16px;line-height:20px;height:20px;color:#cccccc;white-space:pre;position:absolute;right:412.40px;top:981.5px;text-align:right;">0(+0)</div>
<div style="position:absolute;left:636.3px;top:222.0px;width:1.2px;height:17.8px;background:#bdbdbd;"></div>
<div style="position:absolute;left:1213.62px;top:222.0px;width:1.2px;height:17.8px;background:#bdbdbd;"></div>
<div style="position:absolute;left:1329.08px;top:222.0px;width:1.2px;height:17.8px;background:#bdbdbd;"></div>
<div style="position:absolute;left:1425.3px;top:222.0px;width:1.2px;height:17.8px;background:#bdbdbd;"></div>
<div style="position:absolute;left:1521.52px;top:222.0px;width:1.2px;height:17.8px;background:#bdbdbd;"></div>
<div style="position:absolute;left:636.3px;top:242.0px;width:1.2px;height:17.8px;background:#bdbdbd;"></div>
<div style="position:absolute;left:1213.62px;top:242.0px;width:1.2px;height:17.8px;background:#bdbdbd;"></div>
<div style="position:absolute;left:1329.08px;top:242.0px;width:1.2px;height:17.8px;background:#bdbdbd;"></div>
<div style="position:absolute;left:1425.3px;top:242.0px;width:1.2px;height:17.8px;background:#bdbdbd;"></div>
<div style="position:absolute;left:1521.52px;top:242.0px;width:1.2px;height:17.8px;background:#bdbdbd;"></div>
<div style="position:absolute;left:636.3px;top:262.0px;width:1.2px;height:17.8px;background:#bdbdbd;"></div>
<div style="position:absolute;left:1213.62px;top:262.0px;width:1.2px;height:17.8px;background:#bdbdbd;"></div>
<div style="position:absolute;left:1329.08px;top:262.0px;width:1.2px;height:17.8px;background:#bdbdbd;"></div>
<div style="position:absolute;left:1425.3px;top:262.0px;width:1.2px;height:17.8px;background:#bdbdbd;"></div>
<div style="position:absolute;left:1521.52px;top:262.0px;width:1.2px;height:17.8px;background:#bdbdbd;"></div>
<div style="position:absolute;left:636.3px;top:282.0px;width:1.2px;height:17.8px;background:#bdbdbd;"></div>
<div style="position:absolute;left:1213.62px;top:282.0px;width:1.2px;height:17.8px;background:#bdbdbd;"></div>
<div style="position:absolute;left:1329.08px;top:282.0px;width:1.2px;height:17.8px;background:#bdbdbd;"></div>
<div style="position:absolute;left:1425.3px;top:282.0px;width:1.2px;height:17.8px;background:#bdbdbd;"></div>
<div style="position:absolute;left:1521.52px;top:282.0px;width:1.2px;height:17.8px;background:#bdbdbd;"></div>
<div style="position:absolute;left:636.3px;top:302.0px;width:1.2px;height:17.8px;background:#bdbdbd;"></div>
<div style="position:absolute;left:1213.62px;top:302.0px;width:1.2px;height:17.8px;background:#bdbdbd;"></div>
<div style="position:absolute;left:1329.08px;top:302.0px;width:1.2px;height:17.8px;background:#bdbdbd;"></div>
<div style="position:absolute;left:1425.3px;top:302.0px;width:1.2px;height:17.8px;background:#bdbdbd;"></div>
<div style="position:absolute;left:1521.52px;top:302.0px;width:1.2px;height:17.8px;background:#bdbdbd;"></div>
<div style="position:absolute;left:636.3px;top:322.0px;width:1.2px;height:17.8px;background:#bdbdbd;"></div>
<div style="position:absolute;left:1213.62px;top:322.0px;width:1.2px;height:17.8px;background:#bdbdbd;"></div>
<div style="position:absolute;left:1329.08px;top:322.0px;width:1.2px;height:17.8px;background:#bdbdbd;"></div>
<div style="position:absolute;left:1425.3px;top:322.0px;width:1.2px;height:17.8px;background:#bdbdbd;"></div>
<div style="position:absolute;left:1521.52px;top:322.0px;width:1.2px;height:17.8px;background:#bdbdbd;"></div>
<div style="position:absolute;left:636.3px;top:342.0px;width:1.2px;height:17.8px;background:#bdbdbd;"></div>
<div style="position:absolute;left:1213.62px;top:342.0px;width:1.2px;height:17.8px;background:#bdbdbd;"></div>
<div style="position:absolute;left:1329.08px;top:342.0px;width:1.2px;height:17.8px;background:#bdbdbd;"></div>
<div style="position:absolute;left:1425.3px;top:342.0px;width:1.2px;height:17.8px;background:#bdbdbd;"></div>
<div style="position:absolute;left:1521.52px;top:342.0px;width:1.2px;height:17.8px;background:#bdbdbd;"></div>
<div style="position:absolute;left:636.3px;top:362.0px;width:1.2px;height:17.8px;background:#bdbdbd;"></div>
<div style="position:absolute;left:1213.62px;top:362.0px;width:1.2px;height:17.8px;background:#bdbdbd;"></div>
<div style="position:absolute;left:1329.08px;top:362.0px;width:1.2px;height:17.8px;background:#bdbdbd;"></div>
<div style="position:absolute;left:1425.3px;top:362.0px;width:1.2px;height:17.8px;background:#bdbdbd;"></div>
<div style="position:absolute;left:1521.52px;top:362.0px;width:1.2px;height:17.8px;background:#bdbdbd;"></div>
<div style="position:absolute;left:636.3px;top:382.0px;width:1.2px;height:17.8px;background:#bdbdbd;"></div>
<div style="position:absolute;left:1213.62px;top:382.0px;width:1.2px;height:17.8px;background:#bdbdbd;"></div>
<div style="position:absolute;left:1329.08px;top:382.0px;width:1.2px;height:17.8px;background:#bdbdbd;"></div>
<div style="position:absolute;left:1425.3px;top:382.0px;width:1.2px;height:17.8px;background:#bdbdbd;"></div>
<div style="position:absolute;left:1521.52px;top:382.0px;width:1.2px;height:17.8px;background:#bdbdbd;"></div>
<div style="position:absolute;left:636.3px;top:402.0px;width:1.2px;height:17.8px;background:#bdbdbd;"></div>
<div style="position:absolute;left:1213.62px;top:402.0px;width:1.2px;height:17.8px;background:#bdbdbd;"></div>
<div style="position:absolute;left:1329.08px;top:402.0px;width:1.2px;height:17.8px;background:#bdbdbd;"></div>
<div style="position:absolute;left:1425.3px;top:402.0px;width:1.2px;height:17.8px;background:#bdbdbd;"></div>
<div style="position:absolute;left:1521.52px;top:402.0px;width:1.2px;height:17.8px;background:#bdbdbd;"></div>
<div style="position:absolute;left:636.3px;top:422.0px;width:1.2px;height:17.8px;background:#bdbdbd;"></div>
<div style="position:absolute;left:1213.62px;top:422.0px;width:1.2px;height:17.8px;background:#bdbdbd;"></div>
<div style="position:absolute;left:1329.08px;top:422.0px;width:1.2px;height:17.8px;background:#bdbdbd;"></div>
<div style="position:absolute;left:1425.3px;top:422.0px;width:1.2px;height:17.8px;background:#bdbdbd;"></div>
<div style="position:absolute;left:1521.52px;top:422.0px;width:1.2px;height:17.8px;background:#bdbdbd;"></div>
<div style="position:absolute;left:636.3px;top:442.0px;width:1.2px;height:17.8px;background:#bdbdbd;"></div>
<div style="position:absolute;left:1213.62px;top:442.0px;width:1.2px;height:17.8px;background:#bdbdbd;"></div>
<div style="position:absolute;left:1329.08px;top:442.0px;width:1.2px;height:17.8px;background:#bdbdbd;"></div>
<div style="position:absolute;left:1425.3px;top:442.0px;width:1.2px;height:17.8px;background:#bdbdbd;"></div>
<div style="position:absolute;left:1521.52px;top:442.0px;width:1.2px;height:17.8px;background:#bdbdbd;"></div>
<div style="position:absolute;left:636.3px;top:462.0px;width:1.2px;height:17.8px;background:#bdbdbd;"></div>
<div style="position:absolute;left:1213.62px;top:462.0px;width:1.2px;height:17.8px;background:#bdbdbd;"></div>
<div style="position:absolute;left:1329.08px;top:462.0px;width:1.2px;height:17.8px;background:#bdbdbd;"></div>
<div style="position:absolute;left:1425.3px;top:462.0px;width:1.2px;height:17.8px;background:#bdbdbd;"></div>
<div style="position:absolute;left:1521.52px;top:462.0px;width:1.2px;height:17.8px;background:#bdbdbd;"></div>
<div style="position:absolute;left:636.3px;top:482.0px;width:1.2px;height:17.8px;background:#bdbdbd;"></div>
<div style="position:absolute;left:1213.62px;top:482.0px;width:1.2px;height:17.8px;background:#bdbdbd;"></div>
<div style="position:absolute;left:1329.08px;top:482.0px;width:1.2px;height:17.8px;background:#bdbdbd;"></div>
<div style="position:absolute;left:1425.3px;top:482.0px;width:1.2px;height:17.8px;background:#bdbdbd;"></div>
<div style="position:absolute;left:1521.52px;top:482.0px;width:1.2px;height:17.8px;background:#bdbdbd;"></div>
<div style="position:absolute;left:636.3px;top:502.0px;width:1.2px;height:17.8px;background:#bdbdbd;"></div>
<div style="position:absolute;left:1213.62px;top:502.0px;width:1.2px;height:17.8px;background:#bdbdbd;"></div>
<div style="position:absolute;left:1329.08px;top:502.0px;width:1.2px;height:17.8px;background:#bdbdbd;"></div>
<div style="position:absolute;left:1425.3px;top:502.0px;width:1.2px;height:17.8px;background:#bdbdbd;"></div>
<div style="position:absolute;left:1521.52px;top:502.0px;width:1.2px;height:17.8px;background:#bdbdbd;"></div>
<div style="position:absolute;left:636.3px;top:522.0px;width:1.2px;height:17.8px;background:#bdbdbd;"></div>
<div style="position:absolute;left:1213.62px;top:522.0px;width:1.2px;height:17.8px;background:#bdbdbd;"></div>
<div style="position:absolute;left:1329.08px;top:522.0px;width:1.2px;height:17.8px;background:#bdbdbd;"></div>
<div style="position:absolute;left:1425.3px;top:522.0px;width:1.2px;height:17.8px;background:#bdbdbd;"></div>
<div style="position:absolute;left:1521.52px;top:522.0px;width:1.2px;height:17.8px;background:#bdbdbd;"></div>
<div style="position:absolute;left:636.3px;top:542.0px;width:1.2px;height:17.8px;background:#bdbdbd;"></div>
<div style="position:absolute;left:1213.62px;top:542.0px;width:1.2px;height:17.8px;background:#bdbdbd;"></div>
<div style="position:absolute;left:1329.08px;top:542.0px;width:1.2px;height:17.8px;background:#bdbdbd;"></div>
<div style="position:absolute;left:1425.3px;top:542.0px;width:1.2px;height:17.8px;background:#bdbdbd;"></div>
<div style="position:absolute;left:1521.52px;top:542.0px;width:1.2px;height:17.8px;background:#bdbdbd;"></div>
<div style="position:absolute;left:636.3px;top:562.0px;width:1.2px;height:17.8px;background:#bdbdbd;"></div>
<div style="position:absolute;left:1213.62px;top:562.0px;width:1.2px;height:17.8px;background:#bdbdbd;"></div>
<div style="position:absolute;left:1329.08px;top:562.0px;width:1.2px;height:17.8px;background:#bdbdbd;"></div>
<div style="position:absolute;left:1425.3px;top:562.0px;width:1.2px;height:17.8px;background:#bdbdbd;"></div>
<div style="position:absolute;left:1521.52px;top:562.0px;width:1.2px;height:17.8px;background:#bdbdbd;"></div>
<div style="position:absolute;left:636.3px;top:582.0px;width:1.2px;height:17.8px;background:#bdbdbd;"></div>
<div style="position:absolute;left:1213.62px;top:582.0px;width:1.2px;height:17.8px;background:#bdbdbd;"></div>
<div style="position:absolute;left:1329.08px;top:582.0px;width:1.2px;height:17.8px;background:#bdbdbd;"></div>
<div style="position:absolute;left:1425.3px;top:582.0px;width:1.2px;height:17.8px;background:#bdbdbd;"></div>
<div style="position:absolute;left:1521.52px;top:582.0px;width:1.2px;height:17.8px;background:#bdbdbd;"></div>
<div style="position:absolute;left:636.3px;top:602.0px;width:1.2px;height:17.8px;background:#bdbdbd;"></div>
<div style="position:absolute;left:1213.62px;top:602.0px;width:1.2px;height:17.8px;background:#bdbdbd;"></div>
<div style="position:absolute;left:1329.08px;top:602.0px;width:1.2px;height:17.8px;background:#bdbdbd;"></div>
<div style="position:absolute;left:1425.3px;top:602.0px;width:1.2px;height:17.8px;background:#bdbdbd;"></div>
<div style="position:absolute;left:1521.52px;top:602.0px;width:1.2px;height:17.8px;background:#bdbdbd;"></div>
<div style="position:absolute;left:636.3px;top:622.0px;width:1.2px;height:17.8px;background:#bdbdbd;"></div>
<div style="position:absolute;left:1213.62px;top:622.0px;width:1.2px;height:17.8px;background:#bdbdbd;"></div>
<div style="position:absolute;left:1329.08px;top:622.0px;width:1.2px;height:17.8px;background:#bdbdbd;"></div>
<div style="position:absolute;left:1425.3px;top:622.0px;width:1.2px;height:17.8px;background:#bdbdbd;"></div>
<div style="position:absolute;left:1521.52px;top:622.0px;width:1.2px;height:17.8px;background:#bdbdbd;"></div>
<div style="position:absolute;left:636.3px;top:642.0px;width:1.2px;height:17.8px;background:#bdbdbd;"></div>
<div style="position:absolute;left:1213.62px;top:642.0px;width:1.2px;height:17.8px;background:#bdbdbd;"></div>
<div style="position:absolute;left:1329.08px;top:642.0px;width:1.2px;height:17.8px;background:#bdbdbd;"></div>
<div style="position:absolute;left:1425.3px;top:642.0px;width:1.2px;height:17.8px;background:#bdbdbd;"></div>
<div style="position:absolute;left:1521.52px;top:642.0px;width:1.2px;height:17.8px;background:#bdbdbd;"></div>
<div style="position:absolute;left:636.3px;top:662.0px;width:1.2px;height:17.8px;background:#bdbdbd;"></div>
<div style="position:absolute;left:1213.62px;top:662.0px;width:1.2px;height:17.8px;background:#bdbdbd;"></div>
<div style="position:absolute;left:1329.08px;top:662.0px;width:1.2px;height:17.8px;background:#bdbdbd;"></div>
<div style="position:absolute;left:1425.3px;top:662.0px;width:1.2px;height:17.8px;background:#bdbdbd;"></div>
<div style="position:absolute;left:1521.52px;top:662.0px;width:1.2px;height:17.8px;background:#bdbdbd;"></div>
<div style="position:absolute;left:636.3px;top:682.0px;width:1.2px;height:17.8px;background:#bdbdbd;"></div>
<div style="position:absolute;left:1213.62px;top:682.0px;width:1.2px;height:17.8px;background:#bdbdbd;"></div>
<div style="position:absolute;left:1329.08px;top:682.0px;width:1.2px;height:17.8px;background:#bdbdbd;"></div>
<div style="position:absolute;left:1425.3px;top:682.0px;width:1.2px;height:17.8px;background:#bdbdbd;"></div>
<div style="position:absolute;left:1521.52px;top:682.0px;width:1.2px;height:17.8px;background:#bdbdbd;"></div>
<div style="position:absolute;left:636.3px;top:702.0px;width:1.2px;height:17.8px;background:#bdbdbd;"></div>
<div style="position:absolute;left:1213.62px;top:702.0px;width:1.2px;height:17.8px;background:#bdbdbd;"></div>
<div style="position:absolute;left:1329.08px;top:702.0px;width:1.2px;height:17.8px;background:#bdbdbd;"></div>
<div style="position:absolute;left:1425.3px;top:702.0px;width:1.2px;height:17.8px;background:#bdbdbd;"></div>
<div style="position:absolute;left:1521.52px;top:702.0px;width:1.2px;height:17.8px;background:#bdbdbd;"></div>
<div style="position:absolute;left:636.3px;top:722.0px;width:1.2px;height:17.8px;background:#bdbdbd;"></div>
<div style="position:absolute;left:1213.62px;top:722.0px;width:1.2px;height:17.8px;background:#bdbdbd;"></div>
<div style="position:absolute;left:1329.08px;top:722.0px;width:1.2px;height:17.8px;background:#bdbdbd;"></div>
<div style="position:absolute;left:1425.3px;top:722.0px;width:1.2px;height:17.8px;background:#bdbdbd;"></div>
<div style="position:absolute;left:1521.52px;top:722.0px;width:1.2px;height:17.8px;background:#bdbdbd;"></div>
<div style="position:absolute;left:636.3px;top:742.0px;width:1.2px;height:17.8px;background:#bdbdbd;"></div>
<div style="position:absolute;left:1213.62px;top:742.0px;width:1.2px;height:17.8px;background:#bdbdbd;"></div>
<div style="position:absolute;left:1329.08px;top:742.0px;width:1.2px;height:17.8px;background:#bdbdbd;"></div>
<div style="position:absolute;left:1425.3px;top:742.0px;width:1.2px;height:17.8px;background:#bdbdbd;"></div>
<div style="position:absolute;left:1521.52px;top:742.0px;width:1.2px;height:17.8px;background:#bdbdbd;"></div>
<div style="position:absolute;left:636.3px;top:762.0px;width:1.2px;height:17.8px;background:#bdbdbd;"></div>
<div style="position:absolute;left:1213.62px;top:762.0px;width:1.2px;height:17.8px;background:#bdbdbd;"></div>
<div style="position:absolute;left:1329.08px;top:762.0px;width:1.2px;height:17.8px;background:#bdbdbd;"></div>
<div style="position:absolute;left:1425.3px;top:762.0px;width:1.2px;height:17.8px;background:#bdbdbd;"></div>
<div style="position:absolute;left:1521.52px;top:762.0px;width:1.2px;height:17.8px;background:#bdbdbd;"></div>
<div style="position:absolute;left:636.3px;top:782.0px;width:1.2px;height:17.8px;background:#bdbdbd;"></div>
<div style="position:absolute;left:1213.62px;top:782.0px;width:1.2px;height:17.8px;background:#bdbdbd;"></div>
<div style="position:absolute;left:1329.08px;top:782.0px;width:1.2px;height:17.8px;background:#bdbdbd;"></div>
<div style="position:absolute;left:1425.3px;top:782.0px;width:1.2px;height:17.8px;background:#bdbdbd;"></div>
<div style="position:absolute;left:1521.52px;top:782.0px;width:1.2px;height:17.8px;background:#bdbdbd;"></div>
<div style="position:absolute;left:636.3px;top:802.0px;width:1.2px;height:17.8px;background:#bdbdbd;"></div>
<div style="position:absolute;left:1213.62px;top:802.0px;width:1.2px;height:17.8px;background:#bdbdbd;"></div>
<div style="position:absolute;left:1329.08px;top:802.0px;width:1.2px;height:17.8px;background:#bdbdbd;"></div>
<div style="position:absolute;left:1425.3px;top:802.0px;width:1.2px;height:17.8px;background:#bdbdbd;"></div>
<div style="position:absolute;left:1521.52px;top:802.0px;width:1.2px;height:17.8px;background:#bdbdbd;"></div>
<div style="position:absolute;left:636.3px;top:822.0px;width:1.2px;height:17.8px;background:#bdbdbd;"></div>
<div style="position:absolute;left:1213.62px;top:822.0px;width:1.2px;height:17.8px;background:#bdbdbd;"></div>
<div style="position:absolute;left:1329.08px;top:822.0px;width:1.2px;height:17.8px;background:#bdbdbd;"></div>
<div style="position:absolute;left:1425.3px;top:822.0px;width:1.2px;height:17.8px;background:#bdbdbd;"></div>
<div style="position:absolute;left:1521.52px;top:822.0px;width:1.2px;height:17.8px;background:#bdbdbd;"></div>
<div style="position:absolute;left:636.3px;top:842.0px;width:1.2px;height:17.8px;background:#bdbdbd;"></div>
<div style="position:absolute;left:1213.62px;top:842.0px;width:1.2px;height:17.8px;background:#bdbdbd;"></div>
<div style="position:absolute;left:1329.08px;top:842.0px;width:1.2px;height:17.8px;background:#bdbdbd;"></div>
<div style="position:absolute;left:1425.3px;top:842.0px;width:1.2px;height:17.8px;background:#bdbdbd;"></div>
<div style="position:absolute;left:1521.52px;top:842.0px;width:1.2px;height:17.8px;background:#bdbdbd;"></div>
<div style="position:absolute;left:636.3px;top:862.0px;width:1.2px;height:17.8px;background:#bdbdbd;"></div>
<div style="position:absolute;left:1213.62px;top:862.0px;width:1.2px;height:17.8px;background:#bdbdbd;"></div>
<div style="position:absolute;left:1329.08px;top:862.0px;width:1.2px;height:17.8px;background:#bdbdbd;"></div>
<div style="position:absolute;left:1425.3px;top:862.0px;width:1.2px;height:17.8px;background:#bdbdbd;"></div>
<div style="position:absolute;left:1521.52px;top:862.0px;width:1.2px;height:17.8px;background:#bdbdbd;"></div>
<div style="position:absolute;left:636.3px;top:882.0px;width:1.2px;height:17.8px;background:#bdbdbd;"></div>
<div style="position:absolute;left:1213.62px;top:882.0px;width:1.2px;height:17.8px;background:#bdbdbd;"></div>
<div style="position:absolute;left:1329.08px;top:882.0px;width:1.2px;height:17.8px;background:#bdbdbd;"></div>
<div style="position:absolute;left:1425.3px;top:882.0px;width:1.2px;height:17.8px;background:#bdbdbd;"></div>
<div style="position:absolute;left:1521.52px;top:882.0px;width:1.2px;height:17.8px;background:#bdbdbd;"></div>
<div style="position:absolute;left:636.3px;top:902.0px;width:1.2px;height:17.8px;background:#bdbdbd;"></div>
<div style="position:absolute;left:1213.62px;top:902.0px;width:1.2px;height:17.8px;background:#bdbdbd;"></div>
<div style="position:absolute;left:1329.08px;top:902.0px;width:1.2px;height:17.8px;background:#bdbdbd;"></div>
<div style="position:absolute;left:1425.3px;top:902.0px;width:1.2px;height:17.8px;background:#bdbdbd;"></div>
<div style="position:absolute;left:1521.52px;top:902.0px;width:1.2px;height:17.8px;background:#bdbdbd;"></div>
<div style="position:absolute;left:636.3px;top:922.0px;width:1.2px;height:17.8px;background:#bdbdbd;"></div>
<div style="position:absolute;left:1213.62px;top:922.0px;width:1.2px;height:17.8px;background:#bdbdbd;"></div>
<div style="position:absolute;left:1329.08px;top:922.0px;width:1.2px;height:17.8px;background:#bdbdbd;"></div>
<div style="position:absolute;left:1425.3px;top:922.0px;width:1.2px;height:17.8px;background:#bdbdbd;"></div>
<div style="position:absolute;left:1521.52px;top:922.0px;width:1.2px;height:17.8px;background:#bdbdbd;"></div>
<div style="position:absolute;left:636.3px;top:942.0px;width:1.2px;height:17.8px;background:#bdbdbd;"></div>
<div style="position:absolute;left:1213.62px;top:942.0px;width:1.2px;height:17.8px;background:#bdbdbd;"></div>
<div style="position:absolute;left:1329.08px;top:942.0px;width:1.2px;height:17.8px;background:#bdbdbd;"></div>
<div style="position:absolute;left:1425.3px;top:942.0px;width:1.2px;height:17.8px;background:#bdbdbd;"></div>
<div style="position:absolute;left:1521.52px;top:942.0px;width:1.2px;height:17.8px;background:#bdbdbd;"></div>
<div style="position:absolute;left:636.3px;top:962.0px;width:1.2px;height:17.8px;background:#bdbdbd;"></div>
<div style="position:absolute;left:1213.62px;top:962.0px;width:1.2px;height:17.8px;background:#bdbdbd;"></div>
<div style="position:absolute;left:1329.08px;top:962.0px;width:1.2px;height:17.8px;background:#bdbdbd;"></div>
<div style="position:absolute;left:1425.3px;top:962.0px;width:1.2px;height:17.8px;background:#bdbdbd;"></div>
<div style="position:absolute;left:1521.52px;top:962.0px;width:1.2px;height:17.8px;background:#bdbdbd;"></div>
<div style="position:absolute;left:636.3px;top:982.0px;width:1.2px;height:17.8px;background:#bdbdbd;"></div>
<div style="position:absolute;left:1213.62px;top:982.0px;width:1.2px;height:17.8px;background:#bdbdbd;"></div>
<div style="position:absolute;left:1329.08px;top:982.0px;width:1.2px;height:17.8px;background:#bdbdbd;"></div>
<div style="position:absolute;left:1425.3px;top:982.0px;width:1.2px;height:17.8px;background:#bdbdbd;"></div>
<div style="position:absolute;left:1521.52px;top:982.0px;width:1.2px;height:17.8px;background:#bdbdbd;"></div>
<svg style="position:absolute;left:1903px;top:122px;" width="14" height="9" viewBox="0 0 14 9"><path d="M1 8L7 1l6 7z" fill="#5a5a5a"/></svg>
<div style="position:absolute;left:1905px;top:137px;width:11px;height:467px;background:#464646;border-radius:6px;"></div>
<svg style="position:absolute;left:1903px;top:987px;" width="14" height="9" viewBox="0 0 14 9"><path d="M1 1L7 8l6-7z" fill="#5a5a5a"/></svg>
<div style="position:absolute;left:0px;top:1003px;width:1920px;height:1px;background:#2b2b2b;"></div>
<div style="position:absolute;left:0px;top:1004px;width:1920px;height:26px;background:#181818;"></div>
<svg style="position:absolute;left:12px;top:1007px;" width="16" height="18" viewBox="0 0 16 18"><path d="M1.8 5.5l5 5-5 5M14 2L8.5 6.8 14 11.8" stroke="#cccccc" stroke-width="1.3" fill="none"/></svg>
<svg style="position:absolute;left:52px;top:1008px;" width="17" height="17" viewBox="0 0 17 17"><circle cx="8.5" cy="8.5" r="7.4" stroke="#cccccc" stroke-width="1.2" fill="none"/><path d="M5.5 5.5l6 6M11.5 5.5l-6 6" stroke="#cccccc" stroke-width="1.2"/></svg>
<div style="position:absolute;left:74px;top:1006.6px;height:20px;line-height:20px;font-size:14.3px;color:#cccccc;font-weight:normal;white-space:pre;font-family:'Liberation Sans', sans-serif;letter-spacing:-0.3px;-webkit-text-stroke:0.12px #cccccc;">0</div>
<svg style="position:absolute;left:87px;top:1007px;" width="18" height="17" viewBox="0 0 18 17"><path d="M9 1.5L1 15.5h16z" stroke="#cccccc" stroke-width="1.2" fill="none" stroke-linejoin="round"/><path d="M9 6.5v5M9 13v1.3" stroke="#cccccc" stroke-width="1.3"/></svg>
<div style="position:absolute;left:110px;top:1006.6px;height:20px;line-height:20px;font-size:14.3px;color:#cccccc;font-weight:normal;white-space:pre;font-family:'Liberation Sans', sans-serif;letter-spacing:-0.3px;-webkit-text-stroke:0.12px #cccccc;">0</div>
<div style="position:absolute;left:139px;top:1006.6px;height:20px;line-height:20px;font-size:14.3px;color:#cccccc;font-weight:normal;white-space:pre;font-family:'Liberation Sans', sans-serif;letter-spacing:-0.3px;-webkit-text-stroke:0.12px #cccccc;">EIDE Project: Debug</div>
<svg style="position:absolute;left:291px;top:1007px;" width="17" height="18" viewBox="0 0 17 18"><path d="M2 1v4a2.5 2.5 0 0 0 5 0V1M4.5 7.5V17" stroke="#cccccc" stroke-width="1.3" fill="none"/><rect x="11" y="1" width="4" height="16" rx="2" stroke="#cccccc" stroke-width="1.3" fill="none"/><path d="M13 10v3" stroke="#cccccc" stroke-width="1.2"/></svg>
<div style="position:absolute;left:315px;top:1006.6px;height:20px;line-height:20px;font-size:14.3px;color:#cccccc;font-weight:normal;white-space:pre;font-family:'Liberation Sans', sans-serif;letter-spacing:-0.3px;-webkit-text-stroke:0.12px #cccccc;">Build</div>
<svg style="position:absolute;left:370px;top:1007px;" width="15" height="18" viewBox="0 0 15 18"><path d="M7.5 1v15M1.5 10l6 6 6-6" stroke="#cccccc" stroke-width="1.3" fill="none"/></svg>
<div style="position:absolute;left:392px;top:1006.6px;height:20px;line-height:20px;font-size:13.3px;color:#cccccc;font-weight:normal;white-space:pre;font-family:'Liberation Sans', sans-serif;letter-spacing:-0.3px;-webkit-text-stroke:0.12px #cccccc;">Flash</div>
<svg style="position:absolute;left:1849px;top:1006px;" width="22" height="20" viewBox="0 0 22 20"><path d="M1.8 14.5C1.8 11 4 9.2 7 9.2h8c3 0 5.2 1.8 5.2 5.3 0 3.2-4 4.8-9.2 4.8S1.8 17.7 1.8 14.5z" stroke="#cccccc" stroke-width="1.6" fill="none"/><circle cx="7.5" cy="5.3" r="3.6" stroke="#cccccc" stroke-width="1.6" fill="none"/><circle cx="14.5" cy="5.3" r="3.6" stroke="#cccccc" stroke-width="1.6" fill="none"/><path d="M8.5 12v3.5M13 12v3.5" stroke="#cccccc" stroke-width="1.5"/></svg>
<svg style="position:absolute;left:1891px;top:1007px;" width="18" height="18" viewBox="0 0 18 18"><path d="M4 13V8a5 5 0 0 1 10 0v5l1.5 2H2.5z" stroke="#cccccc" stroke-width="1.3" fill="none" stroke-linejoin="round"/><path d="M7.5 16.5h3" stroke="#cccccc" stroke-width="1.3"/></svg>
<div style="position:absolute;left:0px;top:1030px;width:1920px;height:50px;background:linear-gradient(90deg,#213b46 0%,#213a45 45%,#1e3042 75%,#1b2945 100%);"></div>
<div style="position:absolute;left:60px;top:1030px;width:360px;height:50px;background:#f0f0f0;"></div>
<svg style="position:absolute;left:19px;top:1044px;" width="22" height="22" viewBox="0 0 22 22"><path d="M0.5 3.2L9 2v8.3H0.5zM10.2 1.8L21.5 0.2v10.1H10.2zM0.5 11.5H9v8.4L0.5 18.7zM10.2 11.5h11.3v10.3l-11.3-1.6z" fill="#ffffff"/></svg>
<svg style="position:absolute;left:74px;top:1044px;" width="22" height="22" viewBox="0 0 22 22"><circle cx="14" cy="8" r="6.5" stroke="#111" stroke-width="1.5" fill="none"/><path d="M9.5 12.5L1.5 20.5" stroke="#111" stroke-width="1.6"/></svg>
<div style="position:absolute;left:110px;top:1043.1px;height:24px;line-height:24px;font-size:19px;color:#222222;font-weight:normal;white-space:pre;font-family:'Liberation Sans', sans-serif;letter-spacing:-0.3px;-webkit-text-stroke:0.12px #222222;"><span style="display:inline-block;width:19.00px;text-align:center;letter-spacing:0">搜</span><span style="display:inline-block;width:19.00px;text-align:center;letter-spacing:0">索</span></div>
<div style="position:absolute;left:60px;top:1078px;width:360px;height:2px;background:#c8c8c8;"></div>
<svg style="position:absolute;left:439px;top:1044px;" width="24" height="22" viewBox="0 0 24 22"><path d="M1.5 1v3.5M14.5 1v3.5M1.5 2.2h13M1.5 17.5V21M14.5 17.5V21M1.5 19.8h13" stroke="#ffffff" stroke-width="1.3" fill="none"/><rect x="2" y="6.2" width="12" height="9.2" stroke="#ffffff" stroke-width="1.3" fill="none"/><path d="M20 0.5v20" stroke="#ffffff" stroke-width="1.3"/><rect x="18.3" y="6.5" width="3.4" height="3.4" fill="#ffffff"/></svg>
<svg style="position:absolute;left:498px;top:1039px;" width="30" height="30" viewBox="0 0 30 30"><defs><linearGradient id="eg1" x1="0" y1="0" x2="1" y2="1"><stop offset="0" stop-color="#35c1f1"/><stop offset="0.5" stop-color="#1a8ad6"/><stop offset="1" stop-color="#0c59a4"/></linearGradient><linearGradient id="eg2" x1="0" y1="0" x2="1" y2="0"><stop offset="0" stop-color="#1b9de2"/><stop offset="1" stop-color="#66eb6e"/></linearGradient></defs><circle cx="15" cy="15" r="14" fill="url(#eg1)"/><path d="M3 11C5 4 11 1 16 1c7 0 13 5 13 12 0 4-3 6-6 6s-5-2-5-4c0-3-3-5-6-5-4 0-7 2-9 5z" fill="url(#eg2)"/><path d="M9 17c0 5 4 9 9 9" stroke="#0b4f91" stroke-width="4" fill="none"/></svg>
<svg style="position:absolute;left:561px;top:1040px;" width="30" height="28" viewBox="0 0 30 28"><path d="M1 3h10l2 2.5h16V26H1z" fill="#f0b429"/><path d="M1 8h28v18H1z" fill="#ffd35c"/><path d="M8 27v-9h14v9h-3v-5h-8v5z" fill="#2a8ee8"/></svg>
<svg style="position:absolute;left:622px;top:1039px;" width="31" height="32" viewBox="0 0 31 32"><path d="M9 6.5V3.5a1.8 1.8 0 0 1 1.8-1.8h9.4A1.8 1.8 0 0 1 22 3.5v3" stroke="#29a8e8" stroke-width="2" fill="none"/><rect x="0.5" y="5.5" width="30" height="25.5" rx="4.5" fill="#f5f5f5"/><rect x="9.5" y="11.5" width="5.6" height="5.6" fill="#f25022"/><rect x="16" y="11.5" width="5.6" height="5.6" fill="#7fba00"/><rect x="9.5" y="18" width="5.6" height="5.6" fill="#00a4ef"/><rect x="16" y="18" width="5.6" height="5.6" fill="#ffb900"/></svg>
<svg style="position:absolute;left:685px;top:1039px;" width="30" height="30" viewBox="0 0 30 30"><path d="M15 15L2.44 7.75A14.5 14.5 0 0 1 27.56 7.75z" fill="#db4437"/><path d="M15 15L27.56 7.75A14.5 14.5 0 0 1 15.00 29.50z" fill="#f4c20d"/><path d="M15 15L15.00 29.50A14.5 14.5 0 0 1 2.44 7.75z" fill="#0f9d58"/><circle cx="15" cy="15" r="7" fill="#ffffff"/><circle cx="15" cy="15" r="5.4" fill="#4285f4"/></svg>
<div style="position:absolute;left:675px;top:1077px;width:51px;height:3px;background:#76b9ed;"></div>
<div style="position:absolute;left:732px;top:1030px;width:61px;height:50px;background:rgba(255,255,255,0.19);"></div>
<div style="position:absolute;left:732px;top:1077px;width:61px;height:3px;background:#76b9ed;"></div>
<svg style="position:absolute;left:747px;top:1040px;" width="31" height="31" viewBox="0 0 100 100"><path d="M71 14L11 66" stroke="#0b74c4" stroke-width="15" stroke-linecap="round"/><path d="M71 86L11 34" stroke="#1f8fe3" stroke-width="15" stroke-linecap="round"/><path d="M70 0.5L97 13v74L70 99.5z" fill="#2ba6f2"/></svg>
<svg style="position:absolute;left:1619px;top:1046px;" width="18" height="12" viewBox="0 0 18 12"><path d="M1 10L9 2l8 8" stroke="#ffffff" stroke-width="1.3" fill="none"/></svg>
<svg style="position:absolute;left:1647px;top:1046px;" width="22" height="16" viewBox="0 0 22 16"><rect x="4" y="3.5" width="15" height="9" stroke="#ffffff" stroke-width="1.2" fill="none"/><rect x="5.5" y="5" width="10" height="6" fill="#ffffff"/><rect x="19" y="6" width="2" height="4" fill="#ffffff"/><path d="M2 1v4M4 1v4M1 5h4v3H2v6" stroke="#ffffff" stroke-width="1" fill="none"/></svg>
<svg style="position:absolute;left:1679px;top:1045px;" width="20" height="18" viewBox="0 0 20 18"><path d="M1.5 16A14 14 0 0 1 15.5 2M4.5 16A11 11 0 0 1 15.5 5M7.5 16A8 8 0 0 1 15.5 8M10.5 16a5 5 0 0 1 5-5" stroke="#ffffff" stroke-width="1.1" fill="none"/><circle cx="15" cy="15.5" r="1.5" fill="#ffffff"/></svg>
<svg style="position:absolute;left:1706px;top:1045px;" width="22" height="18" viewBox="0 0 22 18"><path d="M1.5 6h4l5-4.5v15l-5-4.5h-4z" stroke="#ffffff" stroke-width="1.2" fill="none"/><path d="M13 6.5a3 3 0 0 1 0 5M15.5 4a6.5 6.5 0 0 1 0 10M18.5 1.5a10 10 0 0 1 0 15" stroke="#ffffff" stroke-width="1.1" fill="none"/></svg>
<div style="position:absolute;left:1739px;top:1043.6px;height:22px;line-height:22px;font-size:17px;color:#ffffff;font-weight:normal;white-space:pre;font-family:'Liberation Sans', sans-serif;letter-spacing:-0.3px;-webkit-text-stroke:0.12px #ffffff;"><span style="display:inline-block;width:17.00px;text-align:center;letter-spacing:0">中</span></div>
<div style="position:absolute;left:1786px;top:1034.1px;height:20px;line-height:20px;font-size:16.9px;color:#ffffff;font-weight:normal;white-space:pre;font-family:'Liberation Sans', sans-serif;letter-spacing:-0.3px;-webkit-text-stroke:0.12px #ffffff;">11:30</div>
<div style="position:absolute;left:1765px;top:1056.6px;height:20px;line-height:20px;font-size:16.9px;color:#ffffff;font-weight:normal;white-space:pre;font-family:'Liberation Sans', sans-serif;letter-spacing:-0.3px;-webkit-text-stroke:0.12px #ffffff;">2025/11/16</div>
<svg style="position:absolute;left:1866px;top:1043px;" width="36" height="32" viewBox="0 0 36 32"><path d="M1.5 1h19v14H9l-3 3.5V15H1.5z" fill="#ffffff"/><path d="M4.5 4.5h13M4.5 7.5h13M4.5 10.5h9" stroke="#1b2945" stroke-width="1.2"/><circle cx="22.5" cy="20.5" r="9.5" fill="#2f3640" stroke="#6a7078" stroke-width="1"/></svg>
<div style="position:absolute;left:1884px;top:1055.1px;height:18px;line-height:18px;font-size:15px;color:#ffffff;font-weight:bold;white-space:pre;font-family:'Liberation Sans', sans-serif;letter-spacing:0px;">1</div>
<div style="position:absolute;left:1913px;top:1030px;width:1px;height:50px;background:rgba(255,255,255,0.35);"></div>
</body></html>
